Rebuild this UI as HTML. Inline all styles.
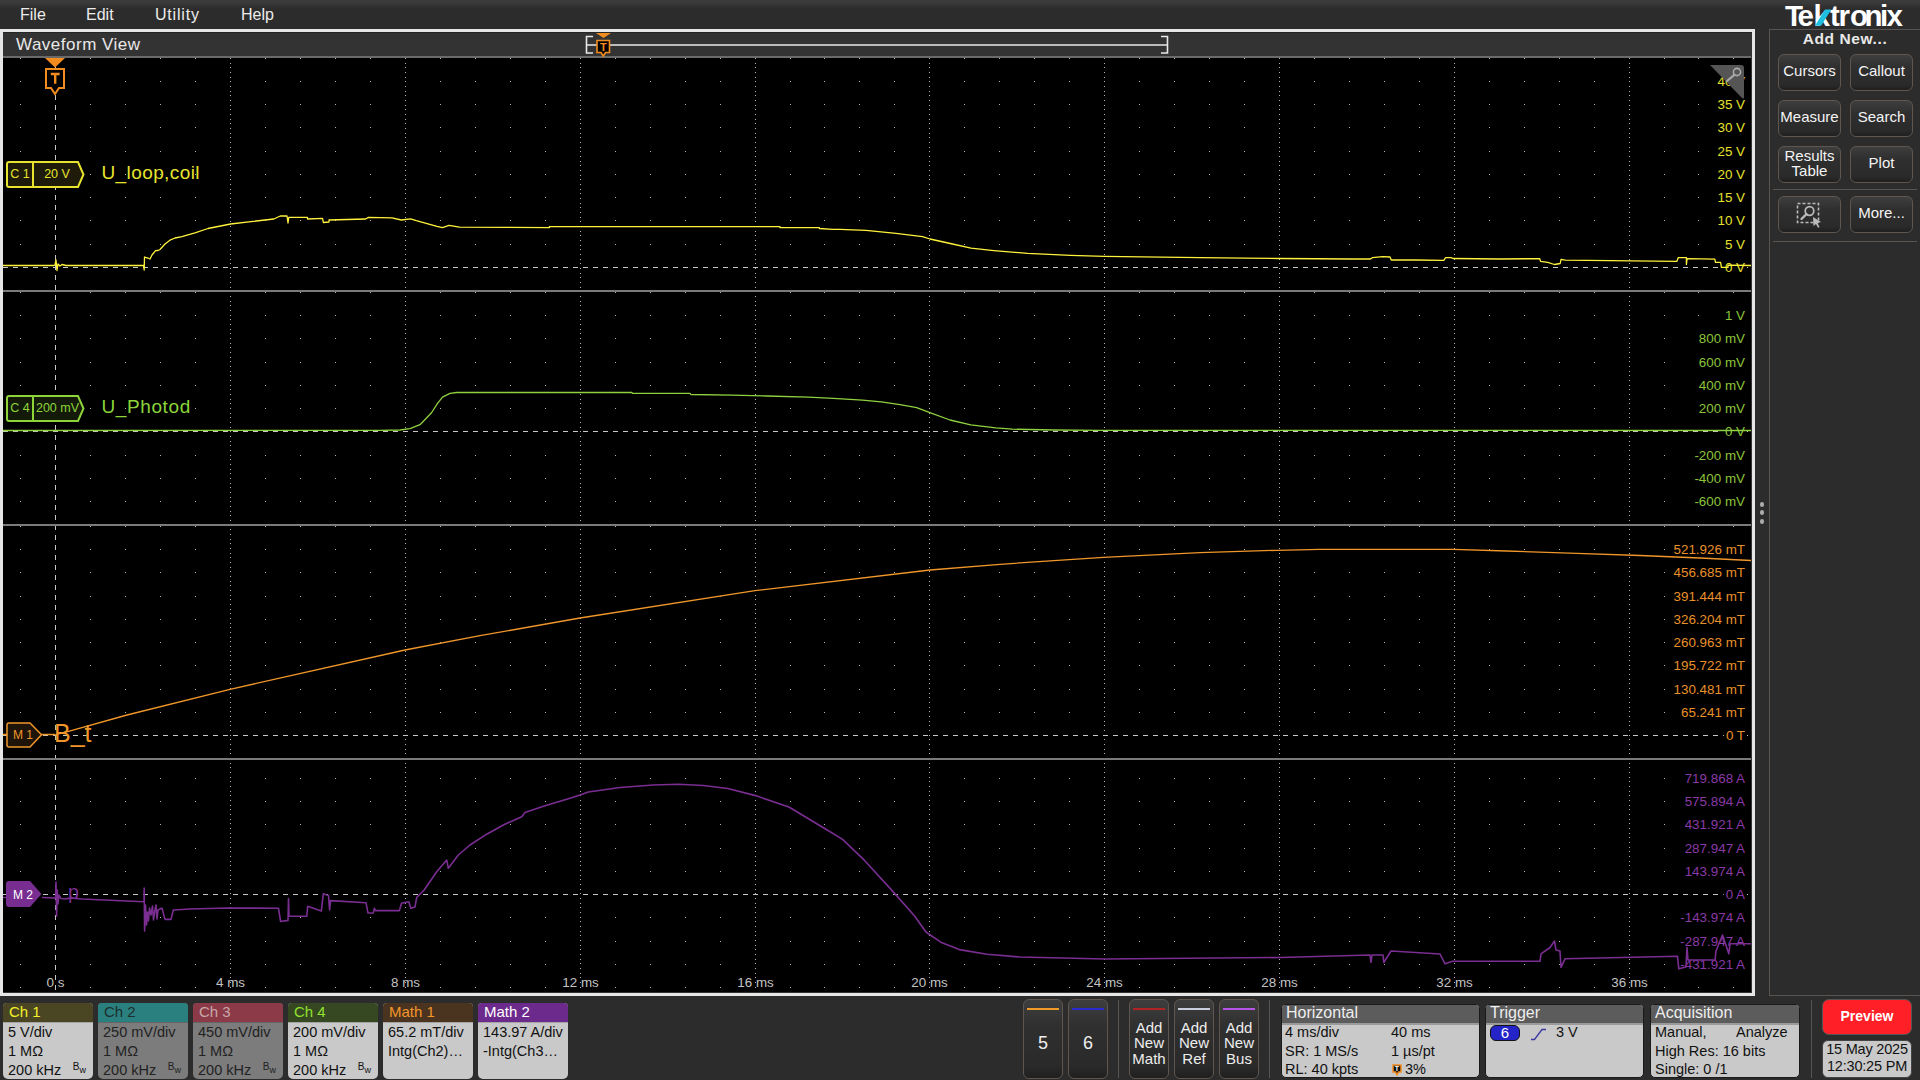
<!DOCTYPE html>
<html><head><meta charset="utf-8"><title>Tektronix Waveform View</title>
<style>
html,body{margin:0;padding:0;width:1920px;height:1080px;overflow:hidden;background:#2c2c2c;font-family:"Liberation Sans",sans-serif}
.btn{position:absolute;box-sizing:border-box;border:1px solid #5e564f;border-radius:6px;background:linear-gradient(#3e3e3e,#2f2f2f 35%,#2a2a2a 85%,#1f1f1f);color:#f4f4f4;font-size:15px;text-align:center;}
</style></head><body>
<div style="position:absolute;left:0;top:0;width:1920px;height:29px;background:linear-gradient(#3c3c3c 0px,#393939 3px,#2c2c2c 9px,#2c2c2c)"></div>
<div style="position:absolute;left:20px;top:4.5px;color:#ececec;font-size:16px;line-height:20px">File</div>
<div style="position:absolute;left:86px;top:4.5px;color:#ececec;font-size:16px;line-height:20px">Edit</div>
<div style="position:absolute;left:155px;top:4.5px;color:#ececec;font-size:16px;line-height:20px;letter-spacing:0.8px">Utility</div>
<div style="position:absolute;left:241px;top:4.5px;color:#ececec;font-size:16px;line-height:20px">Help</div>
<!-- waveform panel frame -->
<div style="position:absolute;left:0;top:29px;width:1755px;height:967px;box-sizing:border-box;border:3px solid #e6e6e6;border-right-width:3px;background:#333"></div>
<div style="position:absolute;left:3px;top:32px;width:1749px;height:1px;background:#262626"></div>
<div style="position:absolute;left:3px;top:56px;width:1748px;height:2px;background:#6a6a6a"></div>
<div style="position:absolute;left:16px;top:34.7px;color:#e8e8e8;font-size:17px;line-height:20px;letter-spacing:0.5px">Waveform View</div>
<svg style="position:absolute;left:580px;top:30px" width="600" height="28" viewBox="580 30 600 28">
<path d="M587 45H1167" stroke="#bbb" stroke-width="2"/>
<path d="M593 36.5H586.5V53H593" fill="none" stroke="#e8e8e8" stroke-width="1.6"/>
<path d="M1161 36.5H1167.5V53H1161" fill="none" stroke="#e8e8e8" stroke-width="1.6"/>
<path d="M596 33H611L603.5 38Z" fill="#f28c1e"/>
<path d="M597 40.5H609.5V52.5H605.5L603.3 56L601 52.5H597Z" fill="#000" stroke="#f28c1e" stroke-width="1.6"/>
<text x="603.3" y="50.5" fill="#f28c1e" font-family="Liberation Sans" font-weight="bold" font-size="11" text-anchor="middle">T</text>
</svg>
<svg id="plot" width="1920" height="1080" viewBox="0 0 1920 1080" style="position:absolute;left:0;top:0">
<defs><clipPath id="pc"><rect x="3" y="58" width="1748" height="934"/></clipPath></defs>
<rect x="3" y="58" width="1748" height="934" fill="#000"/>
<g clip-path="url(#pc)">
<path d="M20 58h1v1h-1zM90 58h1v1h-1zM125 58h1v1h-1zM160 58h1v1h-1zM195 58h1v1h-1zM265 58h1v1h-1zM300 58h1v1h-1zM335 58h1v1h-1zM370 58h1v1h-1zM440 58h1v1h-1zM475 58h1v1h-1zM510 58h1v1h-1zM545 58h1v1h-1zM615 58h1v1h-1zM650 58h1v1h-1zM685 58h1v1h-1zM720 58h1v1h-1zM790 58h1v1h-1zM824 58h1v1h-1zM859 58h1v1h-1zM894 58h1v1h-1zM964 58h1v1h-1zM999 58h1v1h-1zM1034 58h1v1h-1zM1069 58h1v1h-1zM1139 58h1v1h-1zM1174 58h1v1h-1zM1209 58h1v1h-1zM1244 58h1v1h-1zM1314 58h1v1h-1zM1349 58h1v1h-1zM1384 58h1v1h-1zM1419 58h1v1h-1zM1489 58h1v1h-1zM1524 58h1v1h-1zM1559 58h1v1h-1zM1594 58h1v1h-1zM1664 58h1v1h-1zM1698 58h1v1h-1zM1733 58h1v1h-1zM20 81h1v1h-1zM90 81h1v1h-1zM125 81h1v1h-1zM160 81h1v1h-1zM195 81h1v1h-1zM265 81h1v1h-1zM300 81h1v1h-1zM335 81h1v1h-1zM370 81h1v1h-1zM440 81h1v1h-1zM475 81h1v1h-1zM510 81h1v1h-1zM545 81h1v1h-1zM615 81h1v1h-1zM650 81h1v1h-1zM685 81h1v1h-1zM720 81h1v1h-1zM790 81h1v1h-1zM824 81h1v1h-1zM859 81h1v1h-1zM894 81h1v1h-1zM964 81h1v1h-1zM999 81h1v1h-1zM1034 81h1v1h-1zM1069 81h1v1h-1zM1139 81h1v1h-1zM1174 81h1v1h-1zM1209 81h1v1h-1zM1244 81h1v1h-1zM1314 81h1v1h-1zM1349 81h1v1h-1zM1384 81h1v1h-1zM1419 81h1v1h-1zM1489 81h1v1h-1zM1524 81h1v1h-1zM1559 81h1v1h-1zM1594 81h1v1h-1zM1664 81h1v1h-1zM1698 81h1v1h-1zM1733 81h1v1h-1zM20 104h1v1h-1zM90 104h1v1h-1zM125 104h1v1h-1zM160 104h1v1h-1zM195 104h1v1h-1zM265 104h1v1h-1zM300 104h1v1h-1zM335 104h1v1h-1zM370 104h1v1h-1zM440 104h1v1h-1zM475 104h1v1h-1zM510 104h1v1h-1zM545 104h1v1h-1zM615 104h1v1h-1zM650 104h1v1h-1zM685 104h1v1h-1zM720 104h1v1h-1zM790 104h1v1h-1zM824 104h1v1h-1zM859 104h1v1h-1zM894 104h1v1h-1zM964 104h1v1h-1zM999 104h1v1h-1zM1034 104h1v1h-1zM1069 104h1v1h-1zM1139 104h1v1h-1zM1174 104h1v1h-1zM1209 104h1v1h-1zM1244 104h1v1h-1zM1314 104h1v1h-1zM1349 104h1v1h-1zM1384 104h1v1h-1zM1419 104h1v1h-1zM1489 104h1v1h-1zM1524 104h1v1h-1zM1559 104h1v1h-1zM1594 104h1v1h-1zM1664 104h1v1h-1zM1698 104h1v1h-1zM1733 104h1v1h-1zM20 127h1v1h-1zM90 127h1v1h-1zM125 127h1v1h-1zM160 127h1v1h-1zM195 127h1v1h-1zM265 127h1v1h-1zM300 127h1v1h-1zM335 127h1v1h-1zM370 127h1v1h-1zM440 127h1v1h-1zM475 127h1v1h-1zM510 127h1v1h-1zM545 127h1v1h-1zM615 127h1v1h-1zM650 127h1v1h-1zM685 127h1v1h-1zM720 127h1v1h-1zM790 127h1v1h-1zM824 127h1v1h-1zM859 127h1v1h-1zM894 127h1v1h-1zM964 127h1v1h-1zM999 127h1v1h-1zM1034 127h1v1h-1zM1069 127h1v1h-1zM1139 127h1v1h-1zM1174 127h1v1h-1zM1209 127h1v1h-1zM1244 127h1v1h-1zM1314 127h1v1h-1zM1349 127h1v1h-1zM1384 127h1v1h-1zM1419 127h1v1h-1zM1489 127h1v1h-1zM1524 127h1v1h-1zM1559 127h1v1h-1zM1594 127h1v1h-1zM1664 127h1v1h-1zM1698 127h1v1h-1zM1733 127h1v1h-1zM20 151h1v1h-1zM90 151h1v1h-1zM125 151h1v1h-1zM160 151h1v1h-1zM195 151h1v1h-1zM265 151h1v1h-1zM300 151h1v1h-1zM335 151h1v1h-1zM370 151h1v1h-1zM440 151h1v1h-1zM475 151h1v1h-1zM510 151h1v1h-1zM545 151h1v1h-1zM615 151h1v1h-1zM650 151h1v1h-1zM685 151h1v1h-1zM720 151h1v1h-1zM790 151h1v1h-1zM824 151h1v1h-1zM859 151h1v1h-1zM894 151h1v1h-1zM964 151h1v1h-1zM999 151h1v1h-1zM1034 151h1v1h-1zM1069 151h1v1h-1zM1139 151h1v1h-1zM1174 151h1v1h-1zM1209 151h1v1h-1zM1244 151h1v1h-1zM1314 151h1v1h-1zM1349 151h1v1h-1zM1384 151h1v1h-1zM1419 151h1v1h-1zM1489 151h1v1h-1zM1524 151h1v1h-1zM1559 151h1v1h-1zM1594 151h1v1h-1zM1664 151h1v1h-1zM1698 151h1v1h-1zM1733 151h1v1h-1zM20 174h1v1h-1zM90 174h1v1h-1zM125 174h1v1h-1zM160 174h1v1h-1zM195 174h1v1h-1zM265 174h1v1h-1zM300 174h1v1h-1zM335 174h1v1h-1zM370 174h1v1h-1zM440 174h1v1h-1zM475 174h1v1h-1zM510 174h1v1h-1zM545 174h1v1h-1zM615 174h1v1h-1zM650 174h1v1h-1zM685 174h1v1h-1zM720 174h1v1h-1zM790 174h1v1h-1zM824 174h1v1h-1zM859 174h1v1h-1zM894 174h1v1h-1zM964 174h1v1h-1zM999 174h1v1h-1zM1034 174h1v1h-1zM1069 174h1v1h-1zM1139 174h1v1h-1zM1174 174h1v1h-1zM1209 174h1v1h-1zM1244 174h1v1h-1zM1314 174h1v1h-1zM1349 174h1v1h-1zM1384 174h1v1h-1zM1419 174h1v1h-1zM1489 174h1v1h-1zM1524 174h1v1h-1zM1559 174h1v1h-1zM1594 174h1v1h-1zM1664 174h1v1h-1zM1698 174h1v1h-1zM1733 174h1v1h-1zM20 197h1v1h-1zM90 197h1v1h-1zM125 197h1v1h-1zM160 197h1v1h-1zM195 197h1v1h-1zM265 197h1v1h-1zM300 197h1v1h-1zM335 197h1v1h-1zM370 197h1v1h-1zM440 197h1v1h-1zM475 197h1v1h-1zM510 197h1v1h-1zM545 197h1v1h-1zM615 197h1v1h-1zM650 197h1v1h-1zM685 197h1v1h-1zM720 197h1v1h-1zM790 197h1v1h-1zM824 197h1v1h-1zM859 197h1v1h-1zM894 197h1v1h-1zM964 197h1v1h-1zM999 197h1v1h-1zM1034 197h1v1h-1zM1069 197h1v1h-1zM1139 197h1v1h-1zM1174 197h1v1h-1zM1209 197h1v1h-1zM1244 197h1v1h-1zM1314 197h1v1h-1zM1349 197h1v1h-1zM1384 197h1v1h-1zM1419 197h1v1h-1zM1489 197h1v1h-1zM1524 197h1v1h-1zM1559 197h1v1h-1zM1594 197h1v1h-1zM1664 197h1v1h-1zM1698 197h1v1h-1zM1733 197h1v1h-1zM20 220h1v1h-1zM90 220h1v1h-1zM125 220h1v1h-1zM160 220h1v1h-1zM195 220h1v1h-1zM265 220h1v1h-1zM300 220h1v1h-1zM335 220h1v1h-1zM370 220h1v1h-1zM440 220h1v1h-1zM475 220h1v1h-1zM510 220h1v1h-1zM545 220h1v1h-1zM615 220h1v1h-1zM650 220h1v1h-1zM685 220h1v1h-1zM720 220h1v1h-1zM790 220h1v1h-1zM824 220h1v1h-1zM859 220h1v1h-1zM894 220h1v1h-1zM964 220h1v1h-1zM999 220h1v1h-1zM1034 220h1v1h-1zM1069 220h1v1h-1zM1139 220h1v1h-1zM1174 220h1v1h-1zM1209 220h1v1h-1zM1244 220h1v1h-1zM1314 220h1v1h-1zM1349 220h1v1h-1zM1384 220h1v1h-1zM1419 220h1v1h-1zM1489 220h1v1h-1zM1524 220h1v1h-1zM1559 220h1v1h-1zM1594 220h1v1h-1zM1664 220h1v1h-1zM1698 220h1v1h-1zM1733 220h1v1h-1zM20 244h1v1h-1zM90 244h1v1h-1zM125 244h1v1h-1zM160 244h1v1h-1zM195 244h1v1h-1zM265 244h1v1h-1zM300 244h1v1h-1zM335 244h1v1h-1zM370 244h1v1h-1zM440 244h1v1h-1zM475 244h1v1h-1zM510 244h1v1h-1zM545 244h1v1h-1zM615 244h1v1h-1zM650 244h1v1h-1zM685 244h1v1h-1zM720 244h1v1h-1zM790 244h1v1h-1zM824 244h1v1h-1zM859 244h1v1h-1zM894 244h1v1h-1zM964 244h1v1h-1zM999 244h1v1h-1zM1034 244h1v1h-1zM1069 244h1v1h-1zM1139 244h1v1h-1zM1174 244h1v1h-1zM1209 244h1v1h-1zM1244 244h1v1h-1zM1314 244h1v1h-1zM1349 244h1v1h-1zM1384 244h1v1h-1zM1419 244h1v1h-1zM1489 244h1v1h-1zM1524 244h1v1h-1zM1559 244h1v1h-1zM1594 244h1v1h-1zM1664 244h1v1h-1zM1698 244h1v1h-1zM1733 244h1v1h-1zM20 292h1v1h-1zM90 292h1v1h-1zM125 292h1v1h-1zM160 292h1v1h-1zM195 292h1v1h-1zM265 292h1v1h-1zM300 292h1v1h-1zM335 292h1v1h-1zM370 292h1v1h-1zM440 292h1v1h-1zM475 292h1v1h-1zM510 292h1v1h-1zM545 292h1v1h-1zM615 292h1v1h-1zM650 292h1v1h-1zM685 292h1v1h-1zM720 292h1v1h-1zM790 292h1v1h-1zM824 292h1v1h-1zM859 292h1v1h-1zM894 292h1v1h-1zM964 292h1v1h-1zM999 292h1v1h-1zM1034 292h1v1h-1zM1069 292h1v1h-1zM1139 292h1v1h-1zM1174 292h1v1h-1zM1209 292h1v1h-1zM1244 292h1v1h-1zM1314 292h1v1h-1zM1349 292h1v1h-1zM1384 292h1v1h-1zM1419 292h1v1h-1zM1489 292h1v1h-1zM1524 292h1v1h-1zM1559 292h1v1h-1zM1594 292h1v1h-1zM1664 292h1v1h-1zM1698 292h1v1h-1zM1733 292h1v1h-1zM20 315h1v1h-1zM90 315h1v1h-1zM125 315h1v1h-1zM160 315h1v1h-1zM195 315h1v1h-1zM265 315h1v1h-1zM300 315h1v1h-1zM335 315h1v1h-1zM370 315h1v1h-1zM440 315h1v1h-1zM475 315h1v1h-1zM510 315h1v1h-1zM545 315h1v1h-1zM615 315h1v1h-1zM650 315h1v1h-1zM685 315h1v1h-1zM720 315h1v1h-1zM790 315h1v1h-1zM824 315h1v1h-1zM859 315h1v1h-1zM894 315h1v1h-1zM964 315h1v1h-1zM999 315h1v1h-1zM1034 315h1v1h-1zM1069 315h1v1h-1zM1139 315h1v1h-1zM1174 315h1v1h-1zM1209 315h1v1h-1zM1244 315h1v1h-1zM1314 315h1v1h-1zM1349 315h1v1h-1zM1384 315h1v1h-1zM1419 315h1v1h-1zM1489 315h1v1h-1zM1524 315h1v1h-1zM1559 315h1v1h-1zM1594 315h1v1h-1zM1664 315h1v1h-1zM1698 315h1v1h-1zM1733 315h1v1h-1zM20 338h1v1h-1zM90 338h1v1h-1zM125 338h1v1h-1zM160 338h1v1h-1zM195 338h1v1h-1zM265 338h1v1h-1zM300 338h1v1h-1zM335 338h1v1h-1zM370 338h1v1h-1zM440 338h1v1h-1zM475 338h1v1h-1zM510 338h1v1h-1zM545 338h1v1h-1zM615 338h1v1h-1zM650 338h1v1h-1zM685 338h1v1h-1zM720 338h1v1h-1zM790 338h1v1h-1zM824 338h1v1h-1zM859 338h1v1h-1zM894 338h1v1h-1zM964 338h1v1h-1zM999 338h1v1h-1zM1034 338h1v1h-1zM1069 338h1v1h-1zM1139 338h1v1h-1zM1174 338h1v1h-1zM1209 338h1v1h-1zM1244 338h1v1h-1zM1314 338h1v1h-1zM1349 338h1v1h-1zM1384 338h1v1h-1zM1419 338h1v1h-1zM1489 338h1v1h-1zM1524 338h1v1h-1zM1559 338h1v1h-1zM1594 338h1v1h-1zM1664 338h1v1h-1zM1698 338h1v1h-1zM1733 338h1v1h-1zM20 362h1v1h-1zM90 362h1v1h-1zM125 362h1v1h-1zM160 362h1v1h-1zM195 362h1v1h-1zM265 362h1v1h-1zM300 362h1v1h-1zM335 362h1v1h-1zM370 362h1v1h-1zM440 362h1v1h-1zM475 362h1v1h-1zM510 362h1v1h-1zM545 362h1v1h-1zM615 362h1v1h-1zM650 362h1v1h-1zM685 362h1v1h-1zM720 362h1v1h-1zM790 362h1v1h-1zM824 362h1v1h-1zM859 362h1v1h-1zM894 362h1v1h-1zM964 362h1v1h-1zM999 362h1v1h-1zM1034 362h1v1h-1zM1069 362h1v1h-1zM1139 362h1v1h-1zM1174 362h1v1h-1zM1209 362h1v1h-1zM1244 362h1v1h-1zM1314 362h1v1h-1zM1349 362h1v1h-1zM1384 362h1v1h-1zM1419 362h1v1h-1zM1489 362h1v1h-1zM1524 362h1v1h-1zM1559 362h1v1h-1zM1594 362h1v1h-1zM1664 362h1v1h-1zM1698 362h1v1h-1zM1733 362h1v1h-1zM20 385h1v1h-1zM90 385h1v1h-1zM125 385h1v1h-1zM160 385h1v1h-1zM195 385h1v1h-1zM265 385h1v1h-1zM300 385h1v1h-1zM335 385h1v1h-1zM370 385h1v1h-1zM440 385h1v1h-1zM475 385h1v1h-1zM510 385h1v1h-1zM545 385h1v1h-1zM615 385h1v1h-1zM650 385h1v1h-1zM685 385h1v1h-1zM720 385h1v1h-1zM790 385h1v1h-1zM824 385h1v1h-1zM859 385h1v1h-1zM894 385h1v1h-1zM964 385h1v1h-1zM999 385h1v1h-1zM1034 385h1v1h-1zM1069 385h1v1h-1zM1139 385h1v1h-1zM1174 385h1v1h-1zM1209 385h1v1h-1zM1244 385h1v1h-1zM1314 385h1v1h-1zM1349 385h1v1h-1zM1384 385h1v1h-1zM1419 385h1v1h-1zM1489 385h1v1h-1zM1524 385h1v1h-1zM1559 385h1v1h-1zM1594 385h1v1h-1zM1664 385h1v1h-1zM1698 385h1v1h-1zM1733 385h1v1h-1zM20 408h1v1h-1zM90 408h1v1h-1zM125 408h1v1h-1zM160 408h1v1h-1zM195 408h1v1h-1zM265 408h1v1h-1zM300 408h1v1h-1zM335 408h1v1h-1zM370 408h1v1h-1zM440 408h1v1h-1zM475 408h1v1h-1zM510 408h1v1h-1zM545 408h1v1h-1zM615 408h1v1h-1zM650 408h1v1h-1zM685 408h1v1h-1zM720 408h1v1h-1zM790 408h1v1h-1zM824 408h1v1h-1zM859 408h1v1h-1zM894 408h1v1h-1zM964 408h1v1h-1zM999 408h1v1h-1zM1034 408h1v1h-1zM1069 408h1v1h-1zM1139 408h1v1h-1zM1174 408h1v1h-1zM1209 408h1v1h-1zM1244 408h1v1h-1zM1314 408h1v1h-1zM1349 408h1v1h-1zM1384 408h1v1h-1zM1419 408h1v1h-1zM1489 408h1v1h-1zM1524 408h1v1h-1zM1559 408h1v1h-1zM1594 408h1v1h-1zM1664 408h1v1h-1zM1698 408h1v1h-1zM1733 408h1v1h-1zM20 455h1v1h-1zM90 455h1v1h-1zM125 455h1v1h-1zM160 455h1v1h-1zM195 455h1v1h-1zM265 455h1v1h-1zM300 455h1v1h-1zM335 455h1v1h-1zM370 455h1v1h-1zM440 455h1v1h-1zM475 455h1v1h-1zM510 455h1v1h-1zM545 455h1v1h-1zM615 455h1v1h-1zM650 455h1v1h-1zM685 455h1v1h-1zM720 455h1v1h-1zM790 455h1v1h-1zM824 455h1v1h-1zM859 455h1v1h-1zM894 455h1v1h-1zM964 455h1v1h-1zM999 455h1v1h-1zM1034 455h1v1h-1zM1069 455h1v1h-1zM1139 455h1v1h-1zM1174 455h1v1h-1zM1209 455h1v1h-1zM1244 455h1v1h-1zM1314 455h1v1h-1zM1349 455h1v1h-1zM1384 455h1v1h-1zM1419 455h1v1h-1zM1489 455h1v1h-1zM1524 455h1v1h-1zM1559 455h1v1h-1zM1594 455h1v1h-1zM1664 455h1v1h-1zM1698 455h1v1h-1zM1733 455h1v1h-1zM20 478h1v1h-1zM90 478h1v1h-1zM125 478h1v1h-1zM160 478h1v1h-1zM195 478h1v1h-1zM265 478h1v1h-1zM300 478h1v1h-1zM335 478h1v1h-1zM370 478h1v1h-1zM440 478h1v1h-1zM475 478h1v1h-1zM510 478h1v1h-1zM545 478h1v1h-1zM615 478h1v1h-1zM650 478h1v1h-1zM685 478h1v1h-1zM720 478h1v1h-1zM790 478h1v1h-1zM824 478h1v1h-1zM859 478h1v1h-1zM894 478h1v1h-1zM964 478h1v1h-1zM999 478h1v1h-1zM1034 478h1v1h-1zM1069 478h1v1h-1zM1139 478h1v1h-1zM1174 478h1v1h-1zM1209 478h1v1h-1zM1244 478h1v1h-1zM1314 478h1v1h-1zM1349 478h1v1h-1zM1384 478h1v1h-1zM1419 478h1v1h-1zM1489 478h1v1h-1zM1524 478h1v1h-1zM1559 478h1v1h-1zM1594 478h1v1h-1zM1664 478h1v1h-1zM1698 478h1v1h-1zM1733 478h1v1h-1zM20 501h1v1h-1zM90 501h1v1h-1zM125 501h1v1h-1zM160 501h1v1h-1zM195 501h1v1h-1zM265 501h1v1h-1zM300 501h1v1h-1zM335 501h1v1h-1zM370 501h1v1h-1zM440 501h1v1h-1zM475 501h1v1h-1zM510 501h1v1h-1zM545 501h1v1h-1zM615 501h1v1h-1zM650 501h1v1h-1zM685 501h1v1h-1zM720 501h1v1h-1zM790 501h1v1h-1zM824 501h1v1h-1zM859 501h1v1h-1zM894 501h1v1h-1zM964 501h1v1h-1zM999 501h1v1h-1zM1034 501h1v1h-1zM1069 501h1v1h-1zM1139 501h1v1h-1zM1174 501h1v1h-1zM1209 501h1v1h-1zM1244 501h1v1h-1zM1314 501h1v1h-1zM1349 501h1v1h-1zM1384 501h1v1h-1zM1419 501h1v1h-1zM1489 501h1v1h-1zM1524 501h1v1h-1zM1559 501h1v1h-1zM1594 501h1v1h-1zM1664 501h1v1h-1zM1698 501h1v1h-1zM1733 501h1v1h-1zM20 526h1v1h-1zM90 526h1v1h-1zM125 526h1v1h-1zM160 526h1v1h-1zM195 526h1v1h-1zM265 526h1v1h-1zM300 526h1v1h-1zM335 526h1v1h-1zM370 526h1v1h-1zM440 526h1v1h-1zM475 526h1v1h-1zM510 526h1v1h-1zM545 526h1v1h-1zM615 526h1v1h-1zM650 526h1v1h-1zM685 526h1v1h-1zM720 526h1v1h-1zM790 526h1v1h-1zM824 526h1v1h-1zM859 526h1v1h-1zM894 526h1v1h-1zM964 526h1v1h-1zM999 526h1v1h-1zM1034 526h1v1h-1zM1069 526h1v1h-1zM1139 526h1v1h-1zM1174 526h1v1h-1zM1209 526h1v1h-1zM1244 526h1v1h-1zM1314 526h1v1h-1zM1349 526h1v1h-1zM1384 526h1v1h-1zM1419 526h1v1h-1zM1489 526h1v1h-1zM1524 526h1v1h-1zM1559 526h1v1h-1zM1594 526h1v1h-1zM1664 526h1v1h-1zM1698 526h1v1h-1zM1733 526h1v1h-1zM20 549h1v1h-1zM90 549h1v1h-1zM125 549h1v1h-1zM160 549h1v1h-1zM195 549h1v1h-1zM265 549h1v1h-1zM300 549h1v1h-1zM335 549h1v1h-1zM370 549h1v1h-1zM440 549h1v1h-1zM475 549h1v1h-1zM510 549h1v1h-1zM545 549h1v1h-1zM615 549h1v1h-1zM650 549h1v1h-1zM685 549h1v1h-1zM720 549h1v1h-1zM790 549h1v1h-1zM824 549h1v1h-1zM859 549h1v1h-1zM894 549h1v1h-1zM964 549h1v1h-1zM999 549h1v1h-1zM1034 549h1v1h-1zM1069 549h1v1h-1zM1139 549h1v1h-1zM1174 549h1v1h-1zM1209 549h1v1h-1zM1244 549h1v1h-1zM1314 549h1v1h-1zM1349 549h1v1h-1zM1384 549h1v1h-1zM1419 549h1v1h-1zM1489 549h1v1h-1zM1524 549h1v1h-1zM1559 549h1v1h-1zM1594 549h1v1h-1zM1664 549h1v1h-1zM1698 549h1v1h-1zM1733 549h1v1h-1zM20 572h1v1h-1zM90 572h1v1h-1zM125 572h1v1h-1zM160 572h1v1h-1zM195 572h1v1h-1zM265 572h1v1h-1zM300 572h1v1h-1zM335 572h1v1h-1zM370 572h1v1h-1zM440 572h1v1h-1zM475 572h1v1h-1zM510 572h1v1h-1zM545 572h1v1h-1zM615 572h1v1h-1zM650 572h1v1h-1zM685 572h1v1h-1zM720 572h1v1h-1zM790 572h1v1h-1zM824 572h1v1h-1zM859 572h1v1h-1zM894 572h1v1h-1zM964 572h1v1h-1zM999 572h1v1h-1zM1034 572h1v1h-1zM1069 572h1v1h-1zM1139 572h1v1h-1zM1174 572h1v1h-1zM1209 572h1v1h-1zM1244 572h1v1h-1zM1314 572h1v1h-1zM1349 572h1v1h-1zM1384 572h1v1h-1zM1419 572h1v1h-1zM1489 572h1v1h-1zM1524 572h1v1h-1zM1559 572h1v1h-1zM1594 572h1v1h-1zM1664 572h1v1h-1zM1698 572h1v1h-1zM1733 572h1v1h-1zM20 596h1v1h-1zM90 596h1v1h-1zM125 596h1v1h-1zM160 596h1v1h-1zM195 596h1v1h-1zM265 596h1v1h-1zM300 596h1v1h-1zM335 596h1v1h-1zM370 596h1v1h-1zM440 596h1v1h-1zM475 596h1v1h-1zM510 596h1v1h-1zM545 596h1v1h-1zM615 596h1v1h-1zM650 596h1v1h-1zM685 596h1v1h-1zM720 596h1v1h-1zM790 596h1v1h-1zM824 596h1v1h-1zM859 596h1v1h-1zM894 596h1v1h-1zM964 596h1v1h-1zM999 596h1v1h-1zM1034 596h1v1h-1zM1069 596h1v1h-1zM1139 596h1v1h-1zM1174 596h1v1h-1zM1209 596h1v1h-1zM1244 596h1v1h-1zM1314 596h1v1h-1zM1349 596h1v1h-1zM1384 596h1v1h-1zM1419 596h1v1h-1zM1489 596h1v1h-1zM1524 596h1v1h-1zM1559 596h1v1h-1zM1594 596h1v1h-1zM1664 596h1v1h-1zM1698 596h1v1h-1zM1733 596h1v1h-1zM20 619h1v1h-1zM90 619h1v1h-1zM125 619h1v1h-1zM160 619h1v1h-1zM195 619h1v1h-1zM265 619h1v1h-1zM300 619h1v1h-1zM335 619h1v1h-1zM370 619h1v1h-1zM440 619h1v1h-1zM475 619h1v1h-1zM510 619h1v1h-1zM545 619h1v1h-1zM615 619h1v1h-1zM650 619h1v1h-1zM685 619h1v1h-1zM720 619h1v1h-1zM790 619h1v1h-1zM824 619h1v1h-1zM859 619h1v1h-1zM894 619h1v1h-1zM964 619h1v1h-1zM999 619h1v1h-1zM1034 619h1v1h-1zM1069 619h1v1h-1zM1139 619h1v1h-1zM1174 619h1v1h-1zM1209 619h1v1h-1zM1244 619h1v1h-1zM1314 619h1v1h-1zM1349 619h1v1h-1zM1384 619h1v1h-1zM1419 619h1v1h-1zM1489 619h1v1h-1zM1524 619h1v1h-1zM1559 619h1v1h-1zM1594 619h1v1h-1zM1664 619h1v1h-1zM1698 619h1v1h-1zM1733 619h1v1h-1zM20 642h1v1h-1zM90 642h1v1h-1zM125 642h1v1h-1zM160 642h1v1h-1zM195 642h1v1h-1zM265 642h1v1h-1zM300 642h1v1h-1zM335 642h1v1h-1zM370 642h1v1h-1zM440 642h1v1h-1zM475 642h1v1h-1zM510 642h1v1h-1zM545 642h1v1h-1zM615 642h1v1h-1zM650 642h1v1h-1zM685 642h1v1h-1zM720 642h1v1h-1zM790 642h1v1h-1zM824 642h1v1h-1zM859 642h1v1h-1zM894 642h1v1h-1zM964 642h1v1h-1zM999 642h1v1h-1zM1034 642h1v1h-1zM1069 642h1v1h-1zM1139 642h1v1h-1zM1174 642h1v1h-1zM1209 642h1v1h-1zM1244 642h1v1h-1zM1314 642h1v1h-1zM1349 642h1v1h-1zM1384 642h1v1h-1zM1419 642h1v1h-1zM1489 642h1v1h-1zM1524 642h1v1h-1zM1559 642h1v1h-1zM1594 642h1v1h-1zM1664 642h1v1h-1zM1698 642h1v1h-1zM1733 642h1v1h-1zM20 665h1v1h-1zM90 665h1v1h-1zM125 665h1v1h-1zM160 665h1v1h-1zM195 665h1v1h-1zM265 665h1v1h-1zM300 665h1v1h-1zM335 665h1v1h-1zM370 665h1v1h-1zM440 665h1v1h-1zM475 665h1v1h-1zM510 665h1v1h-1zM545 665h1v1h-1zM615 665h1v1h-1zM650 665h1v1h-1zM685 665h1v1h-1zM720 665h1v1h-1zM790 665h1v1h-1zM824 665h1v1h-1zM859 665h1v1h-1zM894 665h1v1h-1zM964 665h1v1h-1zM999 665h1v1h-1zM1034 665h1v1h-1zM1069 665h1v1h-1zM1139 665h1v1h-1zM1174 665h1v1h-1zM1209 665h1v1h-1zM1244 665h1v1h-1zM1314 665h1v1h-1zM1349 665h1v1h-1zM1384 665h1v1h-1zM1419 665h1v1h-1zM1489 665h1v1h-1zM1524 665h1v1h-1zM1559 665h1v1h-1zM1594 665h1v1h-1zM1664 665h1v1h-1zM1698 665h1v1h-1zM1733 665h1v1h-1zM20 689h1v1h-1zM90 689h1v1h-1zM125 689h1v1h-1zM160 689h1v1h-1zM195 689h1v1h-1zM265 689h1v1h-1zM300 689h1v1h-1zM335 689h1v1h-1zM370 689h1v1h-1zM440 689h1v1h-1zM475 689h1v1h-1zM510 689h1v1h-1zM545 689h1v1h-1zM615 689h1v1h-1zM650 689h1v1h-1zM685 689h1v1h-1zM720 689h1v1h-1zM790 689h1v1h-1zM824 689h1v1h-1zM859 689h1v1h-1zM894 689h1v1h-1zM964 689h1v1h-1zM999 689h1v1h-1zM1034 689h1v1h-1zM1069 689h1v1h-1zM1139 689h1v1h-1zM1174 689h1v1h-1zM1209 689h1v1h-1zM1244 689h1v1h-1zM1314 689h1v1h-1zM1349 689h1v1h-1zM1384 689h1v1h-1zM1419 689h1v1h-1zM1489 689h1v1h-1zM1524 689h1v1h-1zM1559 689h1v1h-1zM1594 689h1v1h-1zM1664 689h1v1h-1zM1698 689h1v1h-1zM1733 689h1v1h-1zM20 712h1v1h-1zM90 712h1v1h-1zM125 712h1v1h-1zM160 712h1v1h-1zM195 712h1v1h-1zM265 712h1v1h-1zM300 712h1v1h-1zM335 712h1v1h-1zM370 712h1v1h-1zM440 712h1v1h-1zM475 712h1v1h-1zM510 712h1v1h-1zM545 712h1v1h-1zM615 712h1v1h-1zM650 712h1v1h-1zM685 712h1v1h-1zM720 712h1v1h-1zM790 712h1v1h-1zM824 712h1v1h-1zM859 712h1v1h-1zM894 712h1v1h-1zM964 712h1v1h-1zM999 712h1v1h-1zM1034 712h1v1h-1zM1069 712h1v1h-1zM1139 712h1v1h-1zM1174 712h1v1h-1zM1209 712h1v1h-1zM1244 712h1v1h-1zM1314 712h1v1h-1zM1349 712h1v1h-1zM1384 712h1v1h-1zM1419 712h1v1h-1zM1489 712h1v1h-1zM1524 712h1v1h-1zM1559 712h1v1h-1zM1594 712h1v1h-1zM1664 712h1v1h-1zM1698 712h1v1h-1zM1733 712h1v1h-1zM20 778h1v1h-1zM90 778h1v1h-1zM125 778h1v1h-1zM160 778h1v1h-1zM195 778h1v1h-1zM265 778h1v1h-1zM300 778h1v1h-1zM335 778h1v1h-1zM370 778h1v1h-1zM440 778h1v1h-1zM475 778h1v1h-1zM510 778h1v1h-1zM545 778h1v1h-1zM615 778h1v1h-1zM650 778h1v1h-1zM685 778h1v1h-1zM720 778h1v1h-1zM790 778h1v1h-1zM824 778h1v1h-1zM859 778h1v1h-1zM894 778h1v1h-1zM964 778h1v1h-1zM999 778h1v1h-1zM1034 778h1v1h-1zM1069 778h1v1h-1zM1139 778h1v1h-1zM1174 778h1v1h-1zM1209 778h1v1h-1zM1244 778h1v1h-1zM1314 778h1v1h-1zM1349 778h1v1h-1zM1384 778h1v1h-1zM1419 778h1v1h-1zM1489 778h1v1h-1zM1524 778h1v1h-1zM1559 778h1v1h-1zM1594 778h1v1h-1zM1664 778h1v1h-1zM1698 778h1v1h-1zM1733 778h1v1h-1zM20 801h1v1h-1zM90 801h1v1h-1zM125 801h1v1h-1zM160 801h1v1h-1zM195 801h1v1h-1zM265 801h1v1h-1zM300 801h1v1h-1zM335 801h1v1h-1zM370 801h1v1h-1zM440 801h1v1h-1zM475 801h1v1h-1zM510 801h1v1h-1zM545 801h1v1h-1zM615 801h1v1h-1zM650 801h1v1h-1zM685 801h1v1h-1zM720 801h1v1h-1zM790 801h1v1h-1zM824 801h1v1h-1zM859 801h1v1h-1zM894 801h1v1h-1zM964 801h1v1h-1zM999 801h1v1h-1zM1034 801h1v1h-1zM1069 801h1v1h-1zM1139 801h1v1h-1zM1174 801h1v1h-1zM1209 801h1v1h-1zM1244 801h1v1h-1zM1314 801h1v1h-1zM1349 801h1v1h-1zM1384 801h1v1h-1zM1419 801h1v1h-1zM1489 801h1v1h-1zM1524 801h1v1h-1zM1559 801h1v1h-1zM1594 801h1v1h-1zM1664 801h1v1h-1zM1698 801h1v1h-1zM1733 801h1v1h-1zM20 824h1v1h-1zM90 824h1v1h-1zM125 824h1v1h-1zM160 824h1v1h-1zM195 824h1v1h-1zM265 824h1v1h-1zM300 824h1v1h-1zM335 824h1v1h-1zM370 824h1v1h-1zM440 824h1v1h-1zM475 824h1v1h-1zM510 824h1v1h-1zM545 824h1v1h-1zM615 824h1v1h-1zM650 824h1v1h-1zM685 824h1v1h-1zM720 824h1v1h-1zM790 824h1v1h-1zM824 824h1v1h-1zM859 824h1v1h-1zM894 824h1v1h-1zM964 824h1v1h-1zM999 824h1v1h-1zM1034 824h1v1h-1zM1069 824h1v1h-1zM1139 824h1v1h-1zM1174 824h1v1h-1zM1209 824h1v1h-1zM1244 824h1v1h-1zM1314 824h1v1h-1zM1349 824h1v1h-1zM1384 824h1v1h-1zM1419 824h1v1h-1zM1489 824h1v1h-1zM1524 824h1v1h-1zM1559 824h1v1h-1zM1594 824h1v1h-1zM1664 824h1v1h-1zM1698 824h1v1h-1zM1733 824h1v1h-1zM20 848h1v1h-1zM90 848h1v1h-1zM125 848h1v1h-1zM160 848h1v1h-1zM195 848h1v1h-1zM265 848h1v1h-1zM300 848h1v1h-1zM335 848h1v1h-1zM370 848h1v1h-1zM440 848h1v1h-1zM475 848h1v1h-1zM510 848h1v1h-1zM545 848h1v1h-1zM615 848h1v1h-1zM650 848h1v1h-1zM685 848h1v1h-1zM720 848h1v1h-1zM790 848h1v1h-1zM824 848h1v1h-1zM859 848h1v1h-1zM894 848h1v1h-1zM964 848h1v1h-1zM999 848h1v1h-1zM1034 848h1v1h-1zM1069 848h1v1h-1zM1139 848h1v1h-1zM1174 848h1v1h-1zM1209 848h1v1h-1zM1244 848h1v1h-1zM1314 848h1v1h-1zM1349 848h1v1h-1zM1384 848h1v1h-1zM1419 848h1v1h-1zM1489 848h1v1h-1zM1524 848h1v1h-1zM1559 848h1v1h-1zM1594 848h1v1h-1zM1664 848h1v1h-1zM1698 848h1v1h-1zM1733 848h1v1h-1zM20 871h1v1h-1zM90 871h1v1h-1zM125 871h1v1h-1zM160 871h1v1h-1zM195 871h1v1h-1zM265 871h1v1h-1zM300 871h1v1h-1zM335 871h1v1h-1zM370 871h1v1h-1zM440 871h1v1h-1zM475 871h1v1h-1zM510 871h1v1h-1zM545 871h1v1h-1zM615 871h1v1h-1zM650 871h1v1h-1zM685 871h1v1h-1zM720 871h1v1h-1zM790 871h1v1h-1zM824 871h1v1h-1zM859 871h1v1h-1zM894 871h1v1h-1zM964 871h1v1h-1zM999 871h1v1h-1zM1034 871h1v1h-1zM1069 871h1v1h-1zM1139 871h1v1h-1zM1174 871h1v1h-1zM1209 871h1v1h-1zM1244 871h1v1h-1zM1314 871h1v1h-1zM1349 871h1v1h-1zM1384 871h1v1h-1zM1419 871h1v1h-1zM1489 871h1v1h-1zM1524 871h1v1h-1zM1559 871h1v1h-1zM1594 871h1v1h-1zM1664 871h1v1h-1zM1698 871h1v1h-1zM1733 871h1v1h-1zM20 917h1v1h-1zM90 917h1v1h-1zM125 917h1v1h-1zM160 917h1v1h-1zM195 917h1v1h-1zM265 917h1v1h-1zM300 917h1v1h-1zM335 917h1v1h-1zM370 917h1v1h-1zM440 917h1v1h-1zM475 917h1v1h-1zM510 917h1v1h-1zM545 917h1v1h-1zM615 917h1v1h-1zM650 917h1v1h-1zM685 917h1v1h-1zM720 917h1v1h-1zM790 917h1v1h-1zM824 917h1v1h-1zM859 917h1v1h-1zM894 917h1v1h-1zM964 917h1v1h-1zM999 917h1v1h-1zM1034 917h1v1h-1zM1069 917h1v1h-1zM1139 917h1v1h-1zM1174 917h1v1h-1zM1209 917h1v1h-1zM1244 917h1v1h-1zM1314 917h1v1h-1zM1349 917h1v1h-1zM1384 917h1v1h-1zM1419 917h1v1h-1zM1489 917h1v1h-1zM1524 917h1v1h-1zM1559 917h1v1h-1zM1594 917h1v1h-1zM1664 917h1v1h-1zM1698 917h1v1h-1zM1733 917h1v1h-1zM20 941h1v1h-1zM90 941h1v1h-1zM125 941h1v1h-1zM160 941h1v1h-1zM195 941h1v1h-1zM265 941h1v1h-1zM300 941h1v1h-1zM335 941h1v1h-1zM370 941h1v1h-1zM440 941h1v1h-1zM475 941h1v1h-1zM510 941h1v1h-1zM545 941h1v1h-1zM615 941h1v1h-1zM650 941h1v1h-1zM685 941h1v1h-1zM720 941h1v1h-1zM790 941h1v1h-1zM824 941h1v1h-1zM859 941h1v1h-1zM894 941h1v1h-1zM964 941h1v1h-1zM999 941h1v1h-1zM1034 941h1v1h-1zM1069 941h1v1h-1zM1139 941h1v1h-1zM1174 941h1v1h-1zM1209 941h1v1h-1zM1244 941h1v1h-1zM1314 941h1v1h-1zM1349 941h1v1h-1zM1384 941h1v1h-1zM1419 941h1v1h-1zM1489 941h1v1h-1zM1524 941h1v1h-1zM1559 941h1v1h-1zM1594 941h1v1h-1zM1664 941h1v1h-1zM1698 941h1v1h-1zM1733 941h1v1h-1zM20 964h1v1h-1zM90 964h1v1h-1zM125 964h1v1h-1zM160 964h1v1h-1zM195 964h1v1h-1zM265 964h1v1h-1zM300 964h1v1h-1zM335 964h1v1h-1zM370 964h1v1h-1zM440 964h1v1h-1zM475 964h1v1h-1zM510 964h1v1h-1zM545 964h1v1h-1zM615 964h1v1h-1zM650 964h1v1h-1zM685 964h1v1h-1zM720 964h1v1h-1zM790 964h1v1h-1zM824 964h1v1h-1zM859 964h1v1h-1zM894 964h1v1h-1zM964 964h1v1h-1zM999 964h1v1h-1zM1034 964h1v1h-1zM1069 964h1v1h-1zM1139 964h1v1h-1zM1174 964h1v1h-1zM1209 964h1v1h-1zM1244 964h1v1h-1zM1314 964h1v1h-1zM1349 964h1v1h-1zM1384 964h1v1h-1zM1419 964h1v1h-1zM1489 964h1v1h-1zM1524 964h1v1h-1zM1559 964h1v1h-1zM1594 964h1v1h-1zM1664 964h1v1h-1zM1698 964h1v1h-1zM1733 964h1v1h-1zM20 987h1v1h-1zM90 987h1v1h-1zM125 987h1v1h-1zM160 987h1v1h-1zM195 987h1v1h-1zM265 987h1v1h-1zM300 987h1v1h-1zM335 987h1v1h-1zM370 987h1v1h-1zM440 987h1v1h-1zM475 987h1v1h-1zM510 987h1v1h-1zM545 987h1v1h-1zM615 987h1v1h-1zM650 987h1v1h-1zM685 987h1v1h-1zM720 987h1v1h-1zM790 987h1v1h-1zM824 987h1v1h-1zM859 987h1v1h-1zM894 987h1v1h-1zM964 987h1v1h-1zM999 987h1v1h-1zM1034 987h1v1h-1zM1069 987h1v1h-1zM1139 987h1v1h-1zM1174 987h1v1h-1zM1209 987h1v1h-1zM1244 987h1v1h-1zM1314 987h1v1h-1zM1349 987h1v1h-1zM1384 987h1v1h-1zM1419 987h1v1h-1zM1489 987h1v1h-1zM1524 987h1v1h-1zM1559 987h1v1h-1zM1594 987h1v1h-1zM1664 987h1v1h-1zM1698 987h1v1h-1zM1733 987h1v1h-1z" fill="#b4b4b4"/>
<path d="M230 58h1v1h-1zM230 63h1v1h-1zM230 67h1v1h-1zM230 72h1v1h-1zM230 77h1v1h-1zM230 81h1v1h-1zM230 86h1v1h-1zM230 91h1v1h-1zM230 95h1v1h-1zM230 100h1v1h-1zM230 105h1v1h-1zM230 109h1v1h-1zM230 114h1v1h-1zM230 119h1v1h-1zM230 123h1v1h-1zM230 128h1v1h-1zM230 133h1v1h-1zM230 137h1v1h-1zM230 142h1v1h-1zM230 147h1v1h-1zM230 151h1v1h-1zM230 156h1v1h-1zM230 161h1v1h-1zM230 165h1v1h-1zM230 170h1v1h-1zM230 175h1v1h-1zM230 179h1v1h-1zM230 184h1v1h-1zM230 189h1v1h-1zM230 193h1v1h-1zM230 198h1v1h-1zM230 203h1v1h-1zM230 207h1v1h-1zM230 212h1v1h-1zM230 217h1v1h-1zM230 221h1v1h-1zM230 226h1v1h-1zM230 231h1v1h-1zM230 235h1v1h-1zM230 240h1v1h-1zM230 245h1v1h-1zM230 249h1v1h-1zM230 254h1v1h-1zM230 259h1v1h-1zM230 263h1v1h-1zM230 268h1v1h-1zM230 273h1v1h-1zM230 277h1v1h-1zM230 282h1v1h-1zM230 287h1v1h-1zM230 291h1v1h-1zM230 296h1v1h-1zM230 301h1v1h-1zM230 305h1v1h-1zM230 310h1v1h-1zM230 315h1v1h-1zM230 319h1v1h-1zM230 324h1v1h-1zM230 329h1v1h-1zM230 333h1v1h-1zM230 338h1v1h-1zM230 343h1v1h-1zM230 347h1v1h-1zM230 352h1v1h-1zM230 357h1v1h-1zM230 361h1v1h-1zM230 366h1v1h-1zM230 371h1v1h-1zM230 375h1v1h-1zM230 380h1v1h-1zM230 385h1v1h-1zM230 389h1v1h-1zM230 394h1v1h-1zM230 399h1v1h-1zM230 403h1v1h-1zM230 408h1v1h-1zM230 413h1v1h-1zM230 417h1v1h-1zM230 422h1v1h-1zM230 427h1v1h-1zM230 431h1v1h-1zM230 436h1v1h-1zM230 441h1v1h-1zM230 445h1v1h-1zM230 450h1v1h-1zM230 455h1v1h-1zM230 459h1v1h-1zM230 464h1v1h-1zM230 469h1v1h-1zM230 473h1v1h-1zM230 478h1v1h-1zM230 483h1v1h-1zM230 487h1v1h-1zM230 492h1v1h-1zM230 497h1v1h-1zM230 501h1v1h-1zM230 506h1v1h-1zM230 511h1v1h-1zM230 515h1v1h-1zM230 520h1v1h-1zM230 525h1v1h-1zM230 529h1v1h-1zM230 534h1v1h-1zM230 539h1v1h-1zM230 543h1v1h-1zM230 548h1v1h-1zM230 553h1v1h-1zM230 557h1v1h-1zM230 562h1v1h-1zM230 567h1v1h-1zM230 571h1v1h-1zM230 576h1v1h-1zM230 581h1v1h-1zM230 585h1v1h-1zM230 590h1v1h-1zM230 595h1v1h-1zM230 599h1v1h-1zM230 604h1v1h-1zM230 609h1v1h-1zM230 613h1v1h-1zM230 618h1v1h-1zM230 623h1v1h-1zM230 627h1v1h-1zM230 632h1v1h-1zM230 637h1v1h-1zM230 641h1v1h-1zM230 646h1v1h-1zM230 651h1v1h-1zM230 655h1v1h-1zM230 660h1v1h-1zM230 665h1v1h-1zM230 669h1v1h-1zM230 674h1v1h-1zM230 679h1v1h-1zM230 683h1v1h-1zM230 688h1v1h-1zM230 693h1v1h-1zM230 697h1v1h-1zM230 702h1v1h-1zM230 707h1v1h-1zM230 711h1v1h-1zM230 716h1v1h-1zM230 721h1v1h-1zM230 725h1v1h-1zM230 730h1v1h-1zM230 735h1v1h-1zM230 739h1v1h-1zM230 744h1v1h-1zM230 749h1v1h-1zM230 753h1v1h-1zM230 758h1v1h-1zM230 763h1v1h-1zM230 767h1v1h-1zM230 772h1v1h-1zM230 777h1v1h-1zM230 781h1v1h-1zM230 786h1v1h-1zM230 791h1v1h-1zM230 795h1v1h-1zM230 800h1v1h-1zM230 805h1v1h-1zM230 809h1v1h-1zM230 814h1v1h-1zM230 819h1v1h-1zM230 823h1v1h-1zM230 828h1v1h-1zM230 833h1v1h-1zM230 837h1v1h-1zM230 842h1v1h-1zM230 847h1v1h-1zM230 851h1v1h-1zM230 856h1v1h-1zM230 861h1v1h-1zM230 865h1v1h-1zM230 870h1v1h-1zM230 875h1v1h-1zM230 879h1v1h-1zM230 884h1v1h-1zM230 889h1v1h-1zM230 893h1v1h-1zM230 898h1v1h-1zM230 903h1v1h-1zM230 907h1v1h-1zM230 912h1v1h-1zM230 917h1v1h-1zM230 921h1v1h-1zM230 926h1v1h-1zM230 931h1v1h-1zM230 935h1v1h-1zM230 940h1v1h-1zM230 945h1v1h-1zM230 949h1v1h-1zM230 954h1v1h-1zM230 959h1v1h-1zM230 963h1v1h-1zM230 968h1v1h-1zM230 973h1v1h-1zM230 977h1v1h-1zM230 982h1v1h-1zM230 987h1v1h-1zM405 58h1v1h-1zM405 63h1v1h-1zM405 67h1v1h-1zM405 72h1v1h-1zM405 77h1v1h-1zM405 81h1v1h-1zM405 86h1v1h-1zM405 91h1v1h-1zM405 95h1v1h-1zM405 100h1v1h-1zM405 105h1v1h-1zM405 109h1v1h-1zM405 114h1v1h-1zM405 119h1v1h-1zM405 123h1v1h-1zM405 128h1v1h-1zM405 133h1v1h-1zM405 137h1v1h-1zM405 142h1v1h-1zM405 147h1v1h-1zM405 151h1v1h-1zM405 156h1v1h-1zM405 161h1v1h-1zM405 165h1v1h-1zM405 170h1v1h-1zM405 175h1v1h-1zM405 179h1v1h-1zM405 184h1v1h-1zM405 189h1v1h-1zM405 193h1v1h-1zM405 198h1v1h-1zM405 203h1v1h-1zM405 207h1v1h-1zM405 212h1v1h-1zM405 217h1v1h-1zM405 221h1v1h-1zM405 226h1v1h-1zM405 231h1v1h-1zM405 235h1v1h-1zM405 240h1v1h-1zM405 245h1v1h-1zM405 249h1v1h-1zM405 254h1v1h-1zM405 259h1v1h-1zM405 263h1v1h-1zM405 268h1v1h-1zM405 273h1v1h-1zM405 277h1v1h-1zM405 282h1v1h-1zM405 287h1v1h-1zM405 291h1v1h-1zM405 296h1v1h-1zM405 301h1v1h-1zM405 305h1v1h-1zM405 310h1v1h-1zM405 315h1v1h-1zM405 319h1v1h-1zM405 324h1v1h-1zM405 329h1v1h-1zM405 333h1v1h-1zM405 338h1v1h-1zM405 343h1v1h-1zM405 347h1v1h-1zM405 352h1v1h-1zM405 357h1v1h-1zM405 361h1v1h-1zM405 366h1v1h-1zM405 371h1v1h-1zM405 375h1v1h-1zM405 380h1v1h-1zM405 385h1v1h-1zM405 389h1v1h-1zM405 394h1v1h-1zM405 399h1v1h-1zM405 403h1v1h-1zM405 408h1v1h-1zM405 413h1v1h-1zM405 417h1v1h-1zM405 422h1v1h-1zM405 427h1v1h-1zM405 431h1v1h-1zM405 436h1v1h-1zM405 441h1v1h-1zM405 445h1v1h-1zM405 450h1v1h-1zM405 455h1v1h-1zM405 459h1v1h-1zM405 464h1v1h-1zM405 469h1v1h-1zM405 473h1v1h-1zM405 478h1v1h-1zM405 483h1v1h-1zM405 487h1v1h-1zM405 492h1v1h-1zM405 497h1v1h-1zM405 501h1v1h-1zM405 506h1v1h-1zM405 511h1v1h-1zM405 515h1v1h-1zM405 520h1v1h-1zM405 525h1v1h-1zM405 529h1v1h-1zM405 534h1v1h-1zM405 539h1v1h-1zM405 543h1v1h-1zM405 548h1v1h-1zM405 553h1v1h-1zM405 557h1v1h-1zM405 562h1v1h-1zM405 567h1v1h-1zM405 571h1v1h-1zM405 576h1v1h-1zM405 581h1v1h-1zM405 585h1v1h-1zM405 590h1v1h-1zM405 595h1v1h-1zM405 599h1v1h-1zM405 604h1v1h-1zM405 609h1v1h-1zM405 613h1v1h-1zM405 618h1v1h-1zM405 623h1v1h-1zM405 627h1v1h-1zM405 632h1v1h-1zM405 637h1v1h-1zM405 641h1v1h-1zM405 646h1v1h-1zM405 651h1v1h-1zM405 655h1v1h-1zM405 660h1v1h-1zM405 665h1v1h-1zM405 669h1v1h-1zM405 674h1v1h-1zM405 679h1v1h-1zM405 683h1v1h-1zM405 688h1v1h-1zM405 693h1v1h-1zM405 697h1v1h-1zM405 702h1v1h-1zM405 707h1v1h-1zM405 711h1v1h-1zM405 716h1v1h-1zM405 721h1v1h-1zM405 725h1v1h-1zM405 730h1v1h-1zM405 735h1v1h-1zM405 739h1v1h-1zM405 744h1v1h-1zM405 749h1v1h-1zM405 753h1v1h-1zM405 758h1v1h-1zM405 763h1v1h-1zM405 767h1v1h-1zM405 772h1v1h-1zM405 777h1v1h-1zM405 781h1v1h-1zM405 786h1v1h-1zM405 791h1v1h-1zM405 795h1v1h-1zM405 800h1v1h-1zM405 805h1v1h-1zM405 809h1v1h-1zM405 814h1v1h-1zM405 819h1v1h-1zM405 823h1v1h-1zM405 828h1v1h-1zM405 833h1v1h-1zM405 837h1v1h-1zM405 842h1v1h-1zM405 847h1v1h-1zM405 851h1v1h-1zM405 856h1v1h-1zM405 861h1v1h-1zM405 865h1v1h-1zM405 870h1v1h-1zM405 875h1v1h-1zM405 879h1v1h-1zM405 884h1v1h-1zM405 889h1v1h-1zM405 893h1v1h-1zM405 898h1v1h-1zM405 903h1v1h-1zM405 907h1v1h-1zM405 912h1v1h-1zM405 917h1v1h-1zM405 921h1v1h-1zM405 926h1v1h-1zM405 931h1v1h-1zM405 935h1v1h-1zM405 940h1v1h-1zM405 945h1v1h-1zM405 949h1v1h-1zM405 954h1v1h-1zM405 959h1v1h-1zM405 963h1v1h-1zM405 968h1v1h-1zM405 973h1v1h-1zM405 977h1v1h-1zM405 982h1v1h-1zM405 987h1v1h-1zM580 58h1v1h-1zM580 63h1v1h-1zM580 67h1v1h-1zM580 72h1v1h-1zM580 77h1v1h-1zM580 81h1v1h-1zM580 86h1v1h-1zM580 91h1v1h-1zM580 95h1v1h-1zM580 100h1v1h-1zM580 105h1v1h-1zM580 109h1v1h-1zM580 114h1v1h-1zM580 119h1v1h-1zM580 123h1v1h-1zM580 128h1v1h-1zM580 133h1v1h-1zM580 137h1v1h-1zM580 142h1v1h-1zM580 147h1v1h-1zM580 151h1v1h-1zM580 156h1v1h-1zM580 161h1v1h-1zM580 165h1v1h-1zM580 170h1v1h-1zM580 175h1v1h-1zM580 179h1v1h-1zM580 184h1v1h-1zM580 189h1v1h-1zM580 193h1v1h-1zM580 198h1v1h-1zM580 203h1v1h-1zM580 207h1v1h-1zM580 212h1v1h-1zM580 217h1v1h-1zM580 221h1v1h-1zM580 226h1v1h-1zM580 231h1v1h-1zM580 235h1v1h-1zM580 240h1v1h-1zM580 245h1v1h-1zM580 249h1v1h-1zM580 254h1v1h-1zM580 259h1v1h-1zM580 263h1v1h-1zM580 268h1v1h-1zM580 273h1v1h-1zM580 277h1v1h-1zM580 282h1v1h-1zM580 287h1v1h-1zM580 291h1v1h-1zM580 296h1v1h-1zM580 301h1v1h-1zM580 305h1v1h-1zM580 310h1v1h-1zM580 315h1v1h-1zM580 319h1v1h-1zM580 324h1v1h-1zM580 329h1v1h-1zM580 333h1v1h-1zM580 338h1v1h-1zM580 343h1v1h-1zM580 347h1v1h-1zM580 352h1v1h-1zM580 357h1v1h-1zM580 361h1v1h-1zM580 366h1v1h-1zM580 371h1v1h-1zM580 375h1v1h-1zM580 380h1v1h-1zM580 385h1v1h-1zM580 389h1v1h-1zM580 394h1v1h-1zM580 399h1v1h-1zM580 403h1v1h-1zM580 408h1v1h-1zM580 413h1v1h-1zM580 417h1v1h-1zM580 422h1v1h-1zM580 427h1v1h-1zM580 431h1v1h-1zM580 436h1v1h-1zM580 441h1v1h-1zM580 445h1v1h-1zM580 450h1v1h-1zM580 455h1v1h-1zM580 459h1v1h-1zM580 464h1v1h-1zM580 469h1v1h-1zM580 473h1v1h-1zM580 478h1v1h-1zM580 483h1v1h-1zM580 487h1v1h-1zM580 492h1v1h-1zM580 497h1v1h-1zM580 501h1v1h-1zM580 506h1v1h-1zM580 511h1v1h-1zM580 515h1v1h-1zM580 520h1v1h-1zM580 525h1v1h-1zM580 529h1v1h-1zM580 534h1v1h-1zM580 539h1v1h-1zM580 543h1v1h-1zM580 548h1v1h-1zM580 553h1v1h-1zM580 557h1v1h-1zM580 562h1v1h-1zM580 567h1v1h-1zM580 571h1v1h-1zM580 576h1v1h-1zM580 581h1v1h-1zM580 585h1v1h-1zM580 590h1v1h-1zM580 595h1v1h-1zM580 599h1v1h-1zM580 604h1v1h-1zM580 609h1v1h-1zM580 613h1v1h-1zM580 618h1v1h-1zM580 623h1v1h-1zM580 627h1v1h-1zM580 632h1v1h-1zM580 637h1v1h-1zM580 641h1v1h-1zM580 646h1v1h-1zM580 651h1v1h-1zM580 655h1v1h-1zM580 660h1v1h-1zM580 665h1v1h-1zM580 669h1v1h-1zM580 674h1v1h-1zM580 679h1v1h-1zM580 683h1v1h-1zM580 688h1v1h-1zM580 693h1v1h-1zM580 697h1v1h-1zM580 702h1v1h-1zM580 707h1v1h-1zM580 711h1v1h-1zM580 716h1v1h-1zM580 721h1v1h-1zM580 725h1v1h-1zM580 730h1v1h-1zM580 735h1v1h-1zM580 739h1v1h-1zM580 744h1v1h-1zM580 749h1v1h-1zM580 753h1v1h-1zM580 758h1v1h-1zM580 763h1v1h-1zM580 767h1v1h-1zM580 772h1v1h-1zM580 777h1v1h-1zM580 781h1v1h-1zM580 786h1v1h-1zM580 791h1v1h-1zM580 795h1v1h-1zM580 800h1v1h-1zM580 805h1v1h-1zM580 809h1v1h-1zM580 814h1v1h-1zM580 819h1v1h-1zM580 823h1v1h-1zM580 828h1v1h-1zM580 833h1v1h-1zM580 837h1v1h-1zM580 842h1v1h-1zM580 847h1v1h-1zM580 851h1v1h-1zM580 856h1v1h-1zM580 861h1v1h-1zM580 865h1v1h-1zM580 870h1v1h-1zM580 875h1v1h-1zM580 879h1v1h-1zM580 884h1v1h-1zM580 889h1v1h-1zM580 893h1v1h-1zM580 898h1v1h-1zM580 903h1v1h-1zM580 907h1v1h-1zM580 912h1v1h-1zM580 917h1v1h-1zM580 921h1v1h-1zM580 926h1v1h-1zM580 931h1v1h-1zM580 935h1v1h-1zM580 940h1v1h-1zM580 945h1v1h-1zM580 949h1v1h-1zM580 954h1v1h-1zM580 959h1v1h-1zM580 963h1v1h-1zM580 968h1v1h-1zM580 973h1v1h-1zM580 977h1v1h-1zM580 982h1v1h-1zM580 987h1v1h-1zM755 58h1v1h-1zM755 63h1v1h-1zM755 67h1v1h-1zM755 72h1v1h-1zM755 77h1v1h-1zM755 81h1v1h-1zM755 86h1v1h-1zM755 91h1v1h-1zM755 95h1v1h-1zM755 100h1v1h-1zM755 105h1v1h-1zM755 109h1v1h-1zM755 114h1v1h-1zM755 119h1v1h-1zM755 123h1v1h-1zM755 128h1v1h-1zM755 133h1v1h-1zM755 137h1v1h-1zM755 142h1v1h-1zM755 147h1v1h-1zM755 151h1v1h-1zM755 156h1v1h-1zM755 161h1v1h-1zM755 165h1v1h-1zM755 170h1v1h-1zM755 175h1v1h-1zM755 179h1v1h-1zM755 184h1v1h-1zM755 189h1v1h-1zM755 193h1v1h-1zM755 198h1v1h-1zM755 203h1v1h-1zM755 207h1v1h-1zM755 212h1v1h-1zM755 217h1v1h-1zM755 221h1v1h-1zM755 226h1v1h-1zM755 231h1v1h-1zM755 235h1v1h-1zM755 240h1v1h-1zM755 245h1v1h-1zM755 249h1v1h-1zM755 254h1v1h-1zM755 259h1v1h-1zM755 263h1v1h-1zM755 268h1v1h-1zM755 273h1v1h-1zM755 277h1v1h-1zM755 282h1v1h-1zM755 287h1v1h-1zM755 291h1v1h-1zM755 296h1v1h-1zM755 301h1v1h-1zM755 305h1v1h-1zM755 310h1v1h-1zM755 315h1v1h-1zM755 319h1v1h-1zM755 324h1v1h-1zM755 329h1v1h-1zM755 333h1v1h-1zM755 338h1v1h-1zM755 343h1v1h-1zM755 347h1v1h-1zM755 352h1v1h-1zM755 357h1v1h-1zM755 361h1v1h-1zM755 366h1v1h-1zM755 371h1v1h-1zM755 375h1v1h-1zM755 380h1v1h-1zM755 385h1v1h-1zM755 389h1v1h-1zM755 394h1v1h-1zM755 399h1v1h-1zM755 403h1v1h-1zM755 408h1v1h-1zM755 413h1v1h-1zM755 417h1v1h-1zM755 422h1v1h-1zM755 427h1v1h-1zM755 431h1v1h-1zM755 436h1v1h-1zM755 441h1v1h-1zM755 445h1v1h-1zM755 450h1v1h-1zM755 455h1v1h-1zM755 459h1v1h-1zM755 464h1v1h-1zM755 469h1v1h-1zM755 473h1v1h-1zM755 478h1v1h-1zM755 483h1v1h-1zM755 487h1v1h-1zM755 492h1v1h-1zM755 497h1v1h-1zM755 501h1v1h-1zM755 506h1v1h-1zM755 511h1v1h-1zM755 515h1v1h-1zM755 520h1v1h-1zM755 525h1v1h-1zM755 529h1v1h-1zM755 534h1v1h-1zM755 539h1v1h-1zM755 543h1v1h-1zM755 548h1v1h-1zM755 553h1v1h-1zM755 557h1v1h-1zM755 562h1v1h-1zM755 567h1v1h-1zM755 571h1v1h-1zM755 576h1v1h-1zM755 581h1v1h-1zM755 585h1v1h-1zM755 590h1v1h-1zM755 595h1v1h-1zM755 599h1v1h-1zM755 604h1v1h-1zM755 609h1v1h-1zM755 613h1v1h-1zM755 618h1v1h-1zM755 623h1v1h-1zM755 627h1v1h-1zM755 632h1v1h-1zM755 637h1v1h-1zM755 641h1v1h-1zM755 646h1v1h-1zM755 651h1v1h-1zM755 655h1v1h-1zM755 660h1v1h-1zM755 665h1v1h-1zM755 669h1v1h-1zM755 674h1v1h-1zM755 679h1v1h-1zM755 683h1v1h-1zM755 688h1v1h-1zM755 693h1v1h-1zM755 697h1v1h-1zM755 702h1v1h-1zM755 707h1v1h-1zM755 711h1v1h-1zM755 716h1v1h-1zM755 721h1v1h-1zM755 725h1v1h-1zM755 730h1v1h-1zM755 735h1v1h-1zM755 739h1v1h-1zM755 744h1v1h-1zM755 749h1v1h-1zM755 753h1v1h-1zM755 758h1v1h-1zM755 763h1v1h-1zM755 767h1v1h-1zM755 772h1v1h-1zM755 777h1v1h-1zM755 781h1v1h-1zM755 786h1v1h-1zM755 791h1v1h-1zM755 795h1v1h-1zM755 800h1v1h-1zM755 805h1v1h-1zM755 809h1v1h-1zM755 814h1v1h-1zM755 819h1v1h-1zM755 823h1v1h-1zM755 828h1v1h-1zM755 833h1v1h-1zM755 837h1v1h-1zM755 842h1v1h-1zM755 847h1v1h-1zM755 851h1v1h-1zM755 856h1v1h-1zM755 861h1v1h-1zM755 865h1v1h-1zM755 870h1v1h-1zM755 875h1v1h-1zM755 879h1v1h-1zM755 884h1v1h-1zM755 889h1v1h-1zM755 893h1v1h-1zM755 898h1v1h-1zM755 903h1v1h-1zM755 907h1v1h-1zM755 912h1v1h-1zM755 917h1v1h-1zM755 921h1v1h-1zM755 926h1v1h-1zM755 931h1v1h-1zM755 935h1v1h-1zM755 940h1v1h-1zM755 945h1v1h-1zM755 949h1v1h-1zM755 954h1v1h-1zM755 959h1v1h-1zM755 963h1v1h-1zM755 968h1v1h-1zM755 973h1v1h-1zM755 977h1v1h-1zM755 982h1v1h-1zM755 987h1v1h-1zM929 58h1v1h-1zM929 63h1v1h-1zM929 67h1v1h-1zM929 72h1v1h-1zM929 77h1v1h-1zM929 81h1v1h-1zM929 86h1v1h-1zM929 91h1v1h-1zM929 95h1v1h-1zM929 100h1v1h-1zM929 105h1v1h-1zM929 109h1v1h-1zM929 114h1v1h-1zM929 119h1v1h-1zM929 123h1v1h-1zM929 128h1v1h-1zM929 133h1v1h-1zM929 137h1v1h-1zM929 142h1v1h-1zM929 147h1v1h-1zM929 151h1v1h-1zM929 156h1v1h-1zM929 161h1v1h-1zM929 165h1v1h-1zM929 170h1v1h-1zM929 175h1v1h-1zM929 179h1v1h-1zM929 184h1v1h-1zM929 189h1v1h-1zM929 193h1v1h-1zM929 198h1v1h-1zM929 203h1v1h-1zM929 207h1v1h-1zM929 212h1v1h-1zM929 217h1v1h-1zM929 221h1v1h-1zM929 226h1v1h-1zM929 231h1v1h-1zM929 235h1v1h-1zM929 240h1v1h-1zM929 245h1v1h-1zM929 249h1v1h-1zM929 254h1v1h-1zM929 259h1v1h-1zM929 263h1v1h-1zM929 268h1v1h-1zM929 273h1v1h-1zM929 277h1v1h-1zM929 282h1v1h-1zM929 287h1v1h-1zM929 291h1v1h-1zM929 296h1v1h-1zM929 301h1v1h-1zM929 305h1v1h-1zM929 310h1v1h-1zM929 315h1v1h-1zM929 319h1v1h-1zM929 324h1v1h-1zM929 329h1v1h-1zM929 333h1v1h-1zM929 338h1v1h-1zM929 343h1v1h-1zM929 347h1v1h-1zM929 352h1v1h-1zM929 357h1v1h-1zM929 361h1v1h-1zM929 366h1v1h-1zM929 371h1v1h-1zM929 375h1v1h-1zM929 380h1v1h-1zM929 385h1v1h-1zM929 389h1v1h-1zM929 394h1v1h-1zM929 399h1v1h-1zM929 403h1v1h-1zM929 408h1v1h-1zM929 413h1v1h-1zM929 417h1v1h-1zM929 422h1v1h-1zM929 427h1v1h-1zM929 431h1v1h-1zM929 436h1v1h-1zM929 441h1v1h-1zM929 445h1v1h-1zM929 450h1v1h-1zM929 455h1v1h-1zM929 459h1v1h-1zM929 464h1v1h-1zM929 469h1v1h-1zM929 473h1v1h-1zM929 478h1v1h-1zM929 483h1v1h-1zM929 487h1v1h-1zM929 492h1v1h-1zM929 497h1v1h-1zM929 501h1v1h-1zM929 506h1v1h-1zM929 511h1v1h-1zM929 515h1v1h-1zM929 520h1v1h-1zM929 525h1v1h-1zM929 529h1v1h-1zM929 534h1v1h-1zM929 539h1v1h-1zM929 543h1v1h-1zM929 548h1v1h-1zM929 553h1v1h-1zM929 557h1v1h-1zM929 562h1v1h-1zM929 567h1v1h-1zM929 571h1v1h-1zM929 576h1v1h-1zM929 581h1v1h-1zM929 585h1v1h-1zM929 590h1v1h-1zM929 595h1v1h-1zM929 599h1v1h-1zM929 604h1v1h-1zM929 609h1v1h-1zM929 613h1v1h-1zM929 618h1v1h-1zM929 623h1v1h-1zM929 627h1v1h-1zM929 632h1v1h-1zM929 637h1v1h-1zM929 641h1v1h-1zM929 646h1v1h-1zM929 651h1v1h-1zM929 655h1v1h-1zM929 660h1v1h-1zM929 665h1v1h-1zM929 669h1v1h-1zM929 674h1v1h-1zM929 679h1v1h-1zM929 683h1v1h-1zM929 688h1v1h-1zM929 693h1v1h-1zM929 697h1v1h-1zM929 702h1v1h-1zM929 707h1v1h-1zM929 711h1v1h-1zM929 716h1v1h-1zM929 721h1v1h-1zM929 725h1v1h-1zM929 730h1v1h-1zM929 735h1v1h-1zM929 739h1v1h-1zM929 744h1v1h-1zM929 749h1v1h-1zM929 753h1v1h-1zM929 758h1v1h-1zM929 763h1v1h-1zM929 767h1v1h-1zM929 772h1v1h-1zM929 777h1v1h-1zM929 781h1v1h-1zM929 786h1v1h-1zM929 791h1v1h-1zM929 795h1v1h-1zM929 800h1v1h-1zM929 805h1v1h-1zM929 809h1v1h-1zM929 814h1v1h-1zM929 819h1v1h-1zM929 823h1v1h-1zM929 828h1v1h-1zM929 833h1v1h-1zM929 837h1v1h-1zM929 842h1v1h-1zM929 847h1v1h-1zM929 851h1v1h-1zM929 856h1v1h-1zM929 861h1v1h-1zM929 865h1v1h-1zM929 870h1v1h-1zM929 875h1v1h-1zM929 879h1v1h-1zM929 884h1v1h-1zM929 889h1v1h-1zM929 893h1v1h-1zM929 898h1v1h-1zM929 903h1v1h-1zM929 907h1v1h-1zM929 912h1v1h-1zM929 917h1v1h-1zM929 921h1v1h-1zM929 926h1v1h-1zM929 931h1v1h-1zM929 935h1v1h-1zM929 940h1v1h-1zM929 945h1v1h-1zM929 949h1v1h-1zM929 954h1v1h-1zM929 959h1v1h-1zM929 963h1v1h-1zM929 968h1v1h-1zM929 973h1v1h-1zM929 977h1v1h-1zM929 982h1v1h-1zM929 987h1v1h-1zM1104 58h1v1h-1zM1104 63h1v1h-1zM1104 67h1v1h-1zM1104 72h1v1h-1zM1104 77h1v1h-1zM1104 81h1v1h-1zM1104 86h1v1h-1zM1104 91h1v1h-1zM1104 95h1v1h-1zM1104 100h1v1h-1zM1104 105h1v1h-1zM1104 109h1v1h-1zM1104 114h1v1h-1zM1104 119h1v1h-1zM1104 123h1v1h-1zM1104 128h1v1h-1zM1104 133h1v1h-1zM1104 137h1v1h-1zM1104 142h1v1h-1zM1104 147h1v1h-1zM1104 151h1v1h-1zM1104 156h1v1h-1zM1104 161h1v1h-1zM1104 165h1v1h-1zM1104 170h1v1h-1zM1104 175h1v1h-1zM1104 179h1v1h-1zM1104 184h1v1h-1zM1104 189h1v1h-1zM1104 193h1v1h-1zM1104 198h1v1h-1zM1104 203h1v1h-1zM1104 207h1v1h-1zM1104 212h1v1h-1zM1104 217h1v1h-1zM1104 221h1v1h-1zM1104 226h1v1h-1zM1104 231h1v1h-1zM1104 235h1v1h-1zM1104 240h1v1h-1zM1104 245h1v1h-1zM1104 249h1v1h-1zM1104 254h1v1h-1zM1104 259h1v1h-1zM1104 263h1v1h-1zM1104 268h1v1h-1zM1104 273h1v1h-1zM1104 277h1v1h-1zM1104 282h1v1h-1zM1104 287h1v1h-1zM1104 291h1v1h-1zM1104 296h1v1h-1zM1104 301h1v1h-1zM1104 305h1v1h-1zM1104 310h1v1h-1zM1104 315h1v1h-1zM1104 319h1v1h-1zM1104 324h1v1h-1zM1104 329h1v1h-1zM1104 333h1v1h-1zM1104 338h1v1h-1zM1104 343h1v1h-1zM1104 347h1v1h-1zM1104 352h1v1h-1zM1104 357h1v1h-1zM1104 361h1v1h-1zM1104 366h1v1h-1zM1104 371h1v1h-1zM1104 375h1v1h-1zM1104 380h1v1h-1zM1104 385h1v1h-1zM1104 389h1v1h-1zM1104 394h1v1h-1zM1104 399h1v1h-1zM1104 403h1v1h-1zM1104 408h1v1h-1zM1104 413h1v1h-1zM1104 417h1v1h-1zM1104 422h1v1h-1zM1104 427h1v1h-1zM1104 431h1v1h-1zM1104 436h1v1h-1zM1104 441h1v1h-1zM1104 445h1v1h-1zM1104 450h1v1h-1zM1104 455h1v1h-1zM1104 459h1v1h-1zM1104 464h1v1h-1zM1104 469h1v1h-1zM1104 473h1v1h-1zM1104 478h1v1h-1zM1104 483h1v1h-1zM1104 487h1v1h-1zM1104 492h1v1h-1zM1104 497h1v1h-1zM1104 501h1v1h-1zM1104 506h1v1h-1zM1104 511h1v1h-1zM1104 515h1v1h-1zM1104 520h1v1h-1zM1104 525h1v1h-1zM1104 529h1v1h-1zM1104 534h1v1h-1zM1104 539h1v1h-1zM1104 543h1v1h-1zM1104 548h1v1h-1zM1104 553h1v1h-1zM1104 557h1v1h-1zM1104 562h1v1h-1zM1104 567h1v1h-1zM1104 571h1v1h-1zM1104 576h1v1h-1zM1104 581h1v1h-1zM1104 585h1v1h-1zM1104 590h1v1h-1zM1104 595h1v1h-1zM1104 599h1v1h-1zM1104 604h1v1h-1zM1104 609h1v1h-1zM1104 613h1v1h-1zM1104 618h1v1h-1zM1104 623h1v1h-1zM1104 627h1v1h-1zM1104 632h1v1h-1zM1104 637h1v1h-1zM1104 641h1v1h-1zM1104 646h1v1h-1zM1104 651h1v1h-1zM1104 655h1v1h-1zM1104 660h1v1h-1zM1104 665h1v1h-1zM1104 669h1v1h-1zM1104 674h1v1h-1zM1104 679h1v1h-1zM1104 683h1v1h-1zM1104 688h1v1h-1zM1104 693h1v1h-1zM1104 697h1v1h-1zM1104 702h1v1h-1zM1104 707h1v1h-1zM1104 711h1v1h-1zM1104 716h1v1h-1zM1104 721h1v1h-1zM1104 725h1v1h-1zM1104 730h1v1h-1zM1104 735h1v1h-1zM1104 739h1v1h-1zM1104 744h1v1h-1zM1104 749h1v1h-1zM1104 753h1v1h-1zM1104 758h1v1h-1zM1104 763h1v1h-1zM1104 767h1v1h-1zM1104 772h1v1h-1zM1104 777h1v1h-1zM1104 781h1v1h-1zM1104 786h1v1h-1zM1104 791h1v1h-1zM1104 795h1v1h-1zM1104 800h1v1h-1zM1104 805h1v1h-1zM1104 809h1v1h-1zM1104 814h1v1h-1zM1104 819h1v1h-1zM1104 823h1v1h-1zM1104 828h1v1h-1zM1104 833h1v1h-1zM1104 837h1v1h-1zM1104 842h1v1h-1zM1104 847h1v1h-1zM1104 851h1v1h-1zM1104 856h1v1h-1zM1104 861h1v1h-1zM1104 865h1v1h-1zM1104 870h1v1h-1zM1104 875h1v1h-1zM1104 879h1v1h-1zM1104 884h1v1h-1zM1104 889h1v1h-1zM1104 893h1v1h-1zM1104 898h1v1h-1zM1104 903h1v1h-1zM1104 907h1v1h-1zM1104 912h1v1h-1zM1104 917h1v1h-1zM1104 921h1v1h-1zM1104 926h1v1h-1zM1104 931h1v1h-1zM1104 935h1v1h-1zM1104 940h1v1h-1zM1104 945h1v1h-1zM1104 949h1v1h-1zM1104 954h1v1h-1zM1104 959h1v1h-1zM1104 963h1v1h-1zM1104 968h1v1h-1zM1104 973h1v1h-1zM1104 977h1v1h-1zM1104 982h1v1h-1zM1104 987h1v1h-1zM1279 58h1v1h-1zM1279 63h1v1h-1zM1279 67h1v1h-1zM1279 72h1v1h-1zM1279 77h1v1h-1zM1279 81h1v1h-1zM1279 86h1v1h-1zM1279 91h1v1h-1zM1279 95h1v1h-1zM1279 100h1v1h-1zM1279 105h1v1h-1zM1279 109h1v1h-1zM1279 114h1v1h-1zM1279 119h1v1h-1zM1279 123h1v1h-1zM1279 128h1v1h-1zM1279 133h1v1h-1zM1279 137h1v1h-1zM1279 142h1v1h-1zM1279 147h1v1h-1zM1279 151h1v1h-1zM1279 156h1v1h-1zM1279 161h1v1h-1zM1279 165h1v1h-1zM1279 170h1v1h-1zM1279 175h1v1h-1zM1279 179h1v1h-1zM1279 184h1v1h-1zM1279 189h1v1h-1zM1279 193h1v1h-1zM1279 198h1v1h-1zM1279 203h1v1h-1zM1279 207h1v1h-1zM1279 212h1v1h-1zM1279 217h1v1h-1zM1279 221h1v1h-1zM1279 226h1v1h-1zM1279 231h1v1h-1zM1279 235h1v1h-1zM1279 240h1v1h-1zM1279 245h1v1h-1zM1279 249h1v1h-1zM1279 254h1v1h-1zM1279 259h1v1h-1zM1279 263h1v1h-1zM1279 268h1v1h-1zM1279 273h1v1h-1zM1279 277h1v1h-1zM1279 282h1v1h-1zM1279 287h1v1h-1zM1279 291h1v1h-1zM1279 296h1v1h-1zM1279 301h1v1h-1zM1279 305h1v1h-1zM1279 310h1v1h-1zM1279 315h1v1h-1zM1279 319h1v1h-1zM1279 324h1v1h-1zM1279 329h1v1h-1zM1279 333h1v1h-1zM1279 338h1v1h-1zM1279 343h1v1h-1zM1279 347h1v1h-1zM1279 352h1v1h-1zM1279 357h1v1h-1zM1279 361h1v1h-1zM1279 366h1v1h-1zM1279 371h1v1h-1zM1279 375h1v1h-1zM1279 380h1v1h-1zM1279 385h1v1h-1zM1279 389h1v1h-1zM1279 394h1v1h-1zM1279 399h1v1h-1zM1279 403h1v1h-1zM1279 408h1v1h-1zM1279 413h1v1h-1zM1279 417h1v1h-1zM1279 422h1v1h-1zM1279 427h1v1h-1zM1279 431h1v1h-1zM1279 436h1v1h-1zM1279 441h1v1h-1zM1279 445h1v1h-1zM1279 450h1v1h-1zM1279 455h1v1h-1zM1279 459h1v1h-1zM1279 464h1v1h-1zM1279 469h1v1h-1zM1279 473h1v1h-1zM1279 478h1v1h-1zM1279 483h1v1h-1zM1279 487h1v1h-1zM1279 492h1v1h-1zM1279 497h1v1h-1zM1279 501h1v1h-1zM1279 506h1v1h-1zM1279 511h1v1h-1zM1279 515h1v1h-1zM1279 520h1v1h-1zM1279 525h1v1h-1zM1279 529h1v1h-1zM1279 534h1v1h-1zM1279 539h1v1h-1zM1279 543h1v1h-1zM1279 548h1v1h-1zM1279 553h1v1h-1zM1279 557h1v1h-1zM1279 562h1v1h-1zM1279 567h1v1h-1zM1279 571h1v1h-1zM1279 576h1v1h-1zM1279 581h1v1h-1zM1279 585h1v1h-1zM1279 590h1v1h-1zM1279 595h1v1h-1zM1279 599h1v1h-1zM1279 604h1v1h-1zM1279 609h1v1h-1zM1279 613h1v1h-1zM1279 618h1v1h-1zM1279 623h1v1h-1zM1279 627h1v1h-1zM1279 632h1v1h-1zM1279 637h1v1h-1zM1279 641h1v1h-1zM1279 646h1v1h-1zM1279 651h1v1h-1zM1279 655h1v1h-1zM1279 660h1v1h-1zM1279 665h1v1h-1zM1279 669h1v1h-1zM1279 674h1v1h-1zM1279 679h1v1h-1zM1279 683h1v1h-1zM1279 688h1v1h-1zM1279 693h1v1h-1zM1279 697h1v1h-1zM1279 702h1v1h-1zM1279 707h1v1h-1zM1279 711h1v1h-1zM1279 716h1v1h-1zM1279 721h1v1h-1zM1279 725h1v1h-1zM1279 730h1v1h-1zM1279 735h1v1h-1zM1279 739h1v1h-1zM1279 744h1v1h-1zM1279 749h1v1h-1zM1279 753h1v1h-1zM1279 758h1v1h-1zM1279 763h1v1h-1zM1279 767h1v1h-1zM1279 772h1v1h-1zM1279 777h1v1h-1zM1279 781h1v1h-1zM1279 786h1v1h-1zM1279 791h1v1h-1zM1279 795h1v1h-1zM1279 800h1v1h-1zM1279 805h1v1h-1zM1279 809h1v1h-1zM1279 814h1v1h-1zM1279 819h1v1h-1zM1279 823h1v1h-1zM1279 828h1v1h-1zM1279 833h1v1h-1zM1279 837h1v1h-1zM1279 842h1v1h-1zM1279 847h1v1h-1zM1279 851h1v1h-1zM1279 856h1v1h-1zM1279 861h1v1h-1zM1279 865h1v1h-1zM1279 870h1v1h-1zM1279 875h1v1h-1zM1279 879h1v1h-1zM1279 884h1v1h-1zM1279 889h1v1h-1zM1279 893h1v1h-1zM1279 898h1v1h-1zM1279 903h1v1h-1zM1279 907h1v1h-1zM1279 912h1v1h-1zM1279 917h1v1h-1zM1279 921h1v1h-1zM1279 926h1v1h-1zM1279 931h1v1h-1zM1279 935h1v1h-1zM1279 940h1v1h-1zM1279 945h1v1h-1zM1279 949h1v1h-1zM1279 954h1v1h-1zM1279 959h1v1h-1zM1279 963h1v1h-1zM1279 968h1v1h-1zM1279 973h1v1h-1zM1279 977h1v1h-1zM1279 982h1v1h-1zM1279 987h1v1h-1zM1454 58h1v1h-1zM1454 63h1v1h-1zM1454 67h1v1h-1zM1454 72h1v1h-1zM1454 77h1v1h-1zM1454 81h1v1h-1zM1454 86h1v1h-1zM1454 91h1v1h-1zM1454 95h1v1h-1zM1454 100h1v1h-1zM1454 105h1v1h-1zM1454 109h1v1h-1zM1454 114h1v1h-1zM1454 119h1v1h-1zM1454 123h1v1h-1zM1454 128h1v1h-1zM1454 133h1v1h-1zM1454 137h1v1h-1zM1454 142h1v1h-1zM1454 147h1v1h-1zM1454 151h1v1h-1zM1454 156h1v1h-1zM1454 161h1v1h-1zM1454 165h1v1h-1zM1454 170h1v1h-1zM1454 175h1v1h-1zM1454 179h1v1h-1zM1454 184h1v1h-1zM1454 189h1v1h-1zM1454 193h1v1h-1zM1454 198h1v1h-1zM1454 203h1v1h-1zM1454 207h1v1h-1zM1454 212h1v1h-1zM1454 217h1v1h-1zM1454 221h1v1h-1zM1454 226h1v1h-1zM1454 231h1v1h-1zM1454 235h1v1h-1zM1454 240h1v1h-1zM1454 245h1v1h-1zM1454 249h1v1h-1zM1454 254h1v1h-1zM1454 259h1v1h-1zM1454 263h1v1h-1zM1454 268h1v1h-1zM1454 273h1v1h-1zM1454 277h1v1h-1zM1454 282h1v1h-1zM1454 287h1v1h-1zM1454 291h1v1h-1zM1454 296h1v1h-1zM1454 301h1v1h-1zM1454 305h1v1h-1zM1454 310h1v1h-1zM1454 315h1v1h-1zM1454 319h1v1h-1zM1454 324h1v1h-1zM1454 329h1v1h-1zM1454 333h1v1h-1zM1454 338h1v1h-1zM1454 343h1v1h-1zM1454 347h1v1h-1zM1454 352h1v1h-1zM1454 357h1v1h-1zM1454 361h1v1h-1zM1454 366h1v1h-1zM1454 371h1v1h-1zM1454 375h1v1h-1zM1454 380h1v1h-1zM1454 385h1v1h-1zM1454 389h1v1h-1zM1454 394h1v1h-1zM1454 399h1v1h-1zM1454 403h1v1h-1zM1454 408h1v1h-1zM1454 413h1v1h-1zM1454 417h1v1h-1zM1454 422h1v1h-1zM1454 427h1v1h-1zM1454 431h1v1h-1zM1454 436h1v1h-1zM1454 441h1v1h-1zM1454 445h1v1h-1zM1454 450h1v1h-1zM1454 455h1v1h-1zM1454 459h1v1h-1zM1454 464h1v1h-1zM1454 469h1v1h-1zM1454 473h1v1h-1zM1454 478h1v1h-1zM1454 483h1v1h-1zM1454 487h1v1h-1zM1454 492h1v1h-1zM1454 497h1v1h-1zM1454 501h1v1h-1zM1454 506h1v1h-1zM1454 511h1v1h-1zM1454 515h1v1h-1zM1454 520h1v1h-1zM1454 525h1v1h-1zM1454 529h1v1h-1zM1454 534h1v1h-1zM1454 539h1v1h-1zM1454 543h1v1h-1zM1454 548h1v1h-1zM1454 553h1v1h-1zM1454 557h1v1h-1zM1454 562h1v1h-1zM1454 567h1v1h-1zM1454 571h1v1h-1zM1454 576h1v1h-1zM1454 581h1v1h-1zM1454 585h1v1h-1zM1454 590h1v1h-1zM1454 595h1v1h-1zM1454 599h1v1h-1zM1454 604h1v1h-1zM1454 609h1v1h-1zM1454 613h1v1h-1zM1454 618h1v1h-1zM1454 623h1v1h-1zM1454 627h1v1h-1zM1454 632h1v1h-1zM1454 637h1v1h-1zM1454 641h1v1h-1zM1454 646h1v1h-1zM1454 651h1v1h-1zM1454 655h1v1h-1zM1454 660h1v1h-1zM1454 665h1v1h-1zM1454 669h1v1h-1zM1454 674h1v1h-1zM1454 679h1v1h-1zM1454 683h1v1h-1zM1454 688h1v1h-1zM1454 693h1v1h-1zM1454 697h1v1h-1zM1454 702h1v1h-1zM1454 707h1v1h-1zM1454 711h1v1h-1zM1454 716h1v1h-1zM1454 721h1v1h-1zM1454 725h1v1h-1zM1454 730h1v1h-1zM1454 735h1v1h-1zM1454 739h1v1h-1zM1454 744h1v1h-1zM1454 749h1v1h-1zM1454 753h1v1h-1zM1454 758h1v1h-1zM1454 763h1v1h-1zM1454 767h1v1h-1zM1454 772h1v1h-1zM1454 777h1v1h-1zM1454 781h1v1h-1zM1454 786h1v1h-1zM1454 791h1v1h-1zM1454 795h1v1h-1zM1454 800h1v1h-1zM1454 805h1v1h-1zM1454 809h1v1h-1zM1454 814h1v1h-1zM1454 819h1v1h-1zM1454 823h1v1h-1zM1454 828h1v1h-1zM1454 833h1v1h-1zM1454 837h1v1h-1zM1454 842h1v1h-1zM1454 847h1v1h-1zM1454 851h1v1h-1zM1454 856h1v1h-1zM1454 861h1v1h-1zM1454 865h1v1h-1zM1454 870h1v1h-1zM1454 875h1v1h-1zM1454 879h1v1h-1zM1454 884h1v1h-1zM1454 889h1v1h-1zM1454 893h1v1h-1zM1454 898h1v1h-1zM1454 903h1v1h-1zM1454 907h1v1h-1zM1454 912h1v1h-1zM1454 917h1v1h-1zM1454 921h1v1h-1zM1454 926h1v1h-1zM1454 931h1v1h-1zM1454 935h1v1h-1zM1454 940h1v1h-1zM1454 945h1v1h-1zM1454 949h1v1h-1zM1454 954h1v1h-1zM1454 959h1v1h-1zM1454 963h1v1h-1zM1454 968h1v1h-1zM1454 973h1v1h-1zM1454 977h1v1h-1zM1454 982h1v1h-1zM1454 987h1v1h-1zM1629 58h1v1h-1zM1629 63h1v1h-1zM1629 67h1v1h-1zM1629 72h1v1h-1zM1629 77h1v1h-1zM1629 81h1v1h-1zM1629 86h1v1h-1zM1629 91h1v1h-1zM1629 95h1v1h-1zM1629 100h1v1h-1zM1629 105h1v1h-1zM1629 109h1v1h-1zM1629 114h1v1h-1zM1629 119h1v1h-1zM1629 123h1v1h-1zM1629 128h1v1h-1zM1629 133h1v1h-1zM1629 137h1v1h-1zM1629 142h1v1h-1zM1629 147h1v1h-1zM1629 151h1v1h-1zM1629 156h1v1h-1zM1629 161h1v1h-1zM1629 165h1v1h-1zM1629 170h1v1h-1zM1629 175h1v1h-1zM1629 179h1v1h-1zM1629 184h1v1h-1zM1629 189h1v1h-1zM1629 193h1v1h-1zM1629 198h1v1h-1zM1629 203h1v1h-1zM1629 207h1v1h-1zM1629 212h1v1h-1zM1629 217h1v1h-1zM1629 221h1v1h-1zM1629 226h1v1h-1zM1629 231h1v1h-1zM1629 235h1v1h-1zM1629 240h1v1h-1zM1629 245h1v1h-1zM1629 249h1v1h-1zM1629 254h1v1h-1zM1629 259h1v1h-1zM1629 263h1v1h-1zM1629 268h1v1h-1zM1629 273h1v1h-1zM1629 277h1v1h-1zM1629 282h1v1h-1zM1629 287h1v1h-1zM1629 291h1v1h-1zM1629 296h1v1h-1zM1629 301h1v1h-1zM1629 305h1v1h-1zM1629 310h1v1h-1zM1629 315h1v1h-1zM1629 319h1v1h-1zM1629 324h1v1h-1zM1629 329h1v1h-1zM1629 333h1v1h-1zM1629 338h1v1h-1zM1629 343h1v1h-1zM1629 347h1v1h-1zM1629 352h1v1h-1zM1629 357h1v1h-1zM1629 361h1v1h-1zM1629 366h1v1h-1zM1629 371h1v1h-1zM1629 375h1v1h-1zM1629 380h1v1h-1zM1629 385h1v1h-1zM1629 389h1v1h-1zM1629 394h1v1h-1zM1629 399h1v1h-1zM1629 403h1v1h-1zM1629 408h1v1h-1zM1629 413h1v1h-1zM1629 417h1v1h-1zM1629 422h1v1h-1zM1629 427h1v1h-1zM1629 431h1v1h-1zM1629 436h1v1h-1zM1629 441h1v1h-1zM1629 445h1v1h-1zM1629 450h1v1h-1zM1629 455h1v1h-1zM1629 459h1v1h-1zM1629 464h1v1h-1zM1629 469h1v1h-1zM1629 473h1v1h-1zM1629 478h1v1h-1zM1629 483h1v1h-1zM1629 487h1v1h-1zM1629 492h1v1h-1zM1629 497h1v1h-1zM1629 501h1v1h-1zM1629 506h1v1h-1zM1629 511h1v1h-1zM1629 515h1v1h-1zM1629 520h1v1h-1zM1629 525h1v1h-1zM1629 529h1v1h-1zM1629 534h1v1h-1zM1629 539h1v1h-1zM1629 543h1v1h-1zM1629 548h1v1h-1zM1629 553h1v1h-1zM1629 557h1v1h-1zM1629 562h1v1h-1zM1629 567h1v1h-1zM1629 571h1v1h-1zM1629 576h1v1h-1zM1629 581h1v1h-1zM1629 585h1v1h-1zM1629 590h1v1h-1zM1629 595h1v1h-1zM1629 599h1v1h-1zM1629 604h1v1h-1zM1629 609h1v1h-1zM1629 613h1v1h-1zM1629 618h1v1h-1zM1629 623h1v1h-1zM1629 627h1v1h-1zM1629 632h1v1h-1zM1629 637h1v1h-1zM1629 641h1v1h-1zM1629 646h1v1h-1zM1629 651h1v1h-1zM1629 655h1v1h-1zM1629 660h1v1h-1zM1629 665h1v1h-1zM1629 669h1v1h-1zM1629 674h1v1h-1zM1629 679h1v1h-1zM1629 683h1v1h-1zM1629 688h1v1h-1zM1629 693h1v1h-1zM1629 697h1v1h-1zM1629 702h1v1h-1zM1629 707h1v1h-1zM1629 711h1v1h-1zM1629 716h1v1h-1zM1629 721h1v1h-1zM1629 725h1v1h-1zM1629 730h1v1h-1zM1629 735h1v1h-1zM1629 739h1v1h-1zM1629 744h1v1h-1zM1629 749h1v1h-1zM1629 753h1v1h-1zM1629 758h1v1h-1zM1629 763h1v1h-1zM1629 767h1v1h-1zM1629 772h1v1h-1zM1629 777h1v1h-1zM1629 781h1v1h-1zM1629 786h1v1h-1zM1629 791h1v1h-1zM1629 795h1v1h-1zM1629 800h1v1h-1zM1629 805h1v1h-1zM1629 809h1v1h-1zM1629 814h1v1h-1zM1629 819h1v1h-1zM1629 823h1v1h-1zM1629 828h1v1h-1zM1629 833h1v1h-1zM1629 837h1v1h-1zM1629 842h1v1h-1zM1629 847h1v1h-1zM1629 851h1v1h-1zM1629 856h1v1h-1zM1629 861h1v1h-1zM1629 865h1v1h-1zM1629 870h1v1h-1zM1629 875h1v1h-1zM1629 879h1v1h-1zM1629 884h1v1h-1zM1629 889h1v1h-1zM1629 893h1v1h-1zM1629 898h1v1h-1zM1629 903h1v1h-1zM1629 907h1v1h-1zM1629 912h1v1h-1zM1629 917h1v1h-1zM1629 921h1v1h-1zM1629 926h1v1h-1zM1629 931h1v1h-1zM1629 935h1v1h-1zM1629 940h1v1h-1zM1629 945h1v1h-1zM1629 949h1v1h-1zM1629 954h1v1h-1zM1629 959h1v1h-1zM1629 963h1v1h-1zM1629 968h1v1h-1zM1629 973h1v1h-1zM1629 977h1v1h-1zM1629 982h1v1h-1zM1629 987h1v1h-1z" fill="#b4b4b4"/>
<path d="M55.5 55V992" stroke="#c8c8c8" stroke-width="1" stroke-dasharray="5 5"/>
<g fill="#7a7a7a"><rect x="3" y="290" width="1748" height="2"/><rect x="3" y="524" width="1748" height="2"/><rect x="3" y="758" width="1748" height="2"/></g>
<g stroke="#c8c8c8" stroke-width="1" stroke-dasharray="5 5">
<path d="M3 267.5H1751"/><path d="M3 431.5H1751"/><path d="M3 735.5H1751"/><path d="M3 894.5H1751"/>
</g>
<g font-family="Liberation Sans" font-size="13.4">
<rect x="1715.4" y="74.5" width="31.6" height="14" fill="#000"/><text x="1745" y="86.1" fill="#e6e22e" text-anchor="end">40 V</text><rect x="1715.4" y="97.5" width="31.6" height="14" fill="#000"/><text x="1745" y="109.1" fill="#e6e22e" text-anchor="end">35 V</text><rect x="1715.4" y="120.5" width="31.6" height="14" fill="#000"/><text x="1745" y="132.1" fill="#e6e22e" text-anchor="end">30 V</text><rect x="1715.4" y="144.5" width="31.6" height="14" fill="#000"/><text x="1745" y="156.1" fill="#e6e22e" text-anchor="end">25 V</text><rect x="1715.4" y="167.5" width="31.6" height="14" fill="#000"/><text x="1745" y="179.1" fill="#e6e22e" text-anchor="end">20 V</text><rect x="1715.4" y="190.5" width="31.6" height="14" fill="#000"/><text x="1745" y="202.1" fill="#e6e22e" text-anchor="end">15 V</text><rect x="1715.4" y="213.5" width="31.6" height="14" fill="#000"/><text x="1745" y="225.1" fill="#e6e22e" text-anchor="end">10 V</text><rect x="1722.9" y="237.5" width="24.1" height="14" fill="#000"/><text x="1745" y="249.1" fill="#e6e22e" text-anchor="end">5 V</text><rect x="1722.9" y="260.5" width="24.1" height="14" fill="#000"/><text x="1745" y="272.1" fill="#e6e22e" text-anchor="end">0 V</text>
<rect x="1722.9" y="308.5" width="24.1" height="14" fill="#000"/><text x="1745" y="320.1" fill="#8cc43a" text-anchor="end">1 V</text><rect x="1696.8" y="331.5" width="50.2" height="14" fill="#000"/><text x="1745" y="343.1" fill="#8cc43a" text-anchor="end">800 mV</text><rect x="1696.8" y="355.5" width="50.2" height="14" fill="#000"/><text x="1745" y="367.1" fill="#8cc43a" text-anchor="end">600 mV</text><rect x="1696.8" y="378.5" width="50.2" height="14" fill="#000"/><text x="1745" y="390.1" fill="#8cc43a" text-anchor="end">400 mV</text><rect x="1696.8" y="401.5" width="50.2" height="14" fill="#000"/><text x="1745" y="413.1" fill="#8cc43a" text-anchor="end">200 mV</text><rect x="1722.9" y="424.5" width="24.1" height="14" fill="#000"/><text x="1745" y="436.1" fill="#8cc43a" text-anchor="end">0 V</text><rect x="1692.4" y="448.5" width="54.6" height="14" fill="#000"/><text x="1745" y="460.1" fill="#8cc43a" text-anchor="end">-200 mV</text><rect x="1692.4" y="471.5" width="54.6" height="14" fill="#000"/><text x="1745" y="483.1" fill="#8cc43a" text-anchor="end">-400 mV</text><rect x="1692.4" y="494.5" width="54.6" height="14" fill="#000"/><text x="1745" y="506.1" fill="#8cc43a" text-anchor="end">-600 mV</text>
<rect x="1671.5" y="542.5" width="75.5" height="14" fill="#000"/><text x="1745" y="554.1" fill="#e8902a" text-anchor="end">521.926 mT</text><rect x="1671.5" y="565.5" width="75.5" height="14" fill="#000"/><text x="1745" y="577.1" fill="#e8902a" text-anchor="end">456.685 mT</text><rect x="1671.5" y="589.5" width="75.5" height="14" fill="#000"/><text x="1745" y="601.1" fill="#e8902a" text-anchor="end">391.444 mT</text><rect x="1671.5" y="612.5" width="75.5" height="14" fill="#000"/><text x="1745" y="624.1" fill="#e8902a" text-anchor="end">326.204 mT</text><rect x="1671.5" y="635.5" width="75.5" height="14" fill="#000"/><text x="1745" y="647.1" fill="#e8902a" text-anchor="end">260.963 mT</text><rect x="1671.5" y="658.5" width="75.5" height="14" fill="#000"/><text x="1745" y="670.1" fill="#e8902a" text-anchor="end">195.722 mT</text><rect x="1671.5" y="682.5" width="75.5" height="14" fill="#000"/><text x="1745" y="694.1" fill="#e8902a" text-anchor="end">130.481 mT</text><rect x="1678.9" y="705.5" width="68.1" height="14" fill="#000"/><text x="1745" y="717.1" fill="#e8902a" text-anchor="end">65.241 mT</text><rect x="1723.9" y="728.5" width="23.1" height="14" fill="#000"/><text x="1745" y="740.1" fill="#e8902a" text-anchor="end">0 T</text>
<rect x="1682.6" y="771.5" width="64.4" height="14" fill="#000"/><text x="1745" y="783.1" fill="#8a3aa6" text-anchor="end">719.868 A</text><rect x="1682.6" y="794.5" width="64.4" height="14" fill="#000"/><text x="1745" y="806.1" fill="#8a3aa6" text-anchor="end">575.894 A</text><rect x="1682.6" y="817.5" width="64.4" height="14" fill="#000"/><text x="1745" y="829.1" fill="#8a3aa6" text-anchor="end">431.921 A</text><rect x="1682.6" y="841.5" width="64.4" height="14" fill="#000"/><text x="1745" y="853.1" fill="#8a3aa6" text-anchor="end">287.947 A</text><rect x="1682.6" y="864.5" width="64.4" height="14" fill="#000"/><text x="1745" y="876.1" fill="#8a3aa6" text-anchor="end">143.974 A</text><rect x="1723.6" y="887.5" width="23.4" height="14" fill="#000"/><text x="1745" y="899.1" fill="#8a3aa6" text-anchor="end">0 A</text><rect x="1678.2" y="910.5" width="68.8" height="14" fill="#000"/><text x="1745" y="922.1" fill="#8a3aa6" text-anchor="end">-143.974 A</text><rect x="1678.2" y="934.5" width="68.8" height="14" fill="#000"/><text x="1745" y="946.1" fill="#8a3aa6" text-anchor="end">-287.947 A</text><rect x="1678.2" y="957.5" width="68.8" height="14" fill="#000"/><text x="1745" y="969.1" fill="#8a3aa6" text-anchor="end">-431.921 A</text>
<text x="55.5" y="987" fill="#c4c4c4" text-anchor="middle">0 s</text><text x="230.5" y="987" fill="#c4c4c4" text-anchor="middle">4 ms</text><text x="405.5" y="987" fill="#c4c4c4" text-anchor="middle">8 ms</text><text x="580.5" y="987" fill="#c4c4c4" text-anchor="middle">12 ms</text><text x="755.5" y="987" fill="#c4c4c4" text-anchor="middle">16 ms</text><text x="929.5" y="987" fill="#c4c4c4" text-anchor="middle">20 ms</text><text x="1104.5" y="987" fill="#c4c4c4" text-anchor="middle">24 ms</text><text x="1279.5" y="987" fill="#c4c4c4" text-anchor="middle">28 ms</text><text x="1454.5" y="987" fill="#c4c4c4" text-anchor="middle">32 ms</text><text x="1629.5" y="987" fill="#c4c4c4" text-anchor="middle">36 ms</text>
</g>
<g fill="none" stroke-width="1.3" stroke-linejoin="round">
<path d="M3 265.5 L54 265.5 L55 265 L56 260 L57 270.5 L58 264 L60 266 L62 264.5 L66 265.5 L143.5 265.5 L144.2 270 L144.5 257 L148 258 L150 259 L152 255 L155.6 250.6 L158 250.5 L160 249.5 L165 244 L170.6 239.8 L175 238 L181.9 236.6 L195 232.8 L208 228.5 L230.6 224 L251 221.6 L273.8 219 L280.3 216 L287 216 L288 223 L288.8 217.3 L307.5 217.3 L307.5 219 L322.5 218.4 L323.4 222.5 L329 222 L329 220 L365.6 219 L368.4 217.4 L392 217.8 L401.3 220 L410.6 218.8 L416.3 220.6 L437 226.3 L442.5 227.6 L449 225.3 L459.4 227.2 L549.4 227.6 L549.4 226.6 L780 226.6 L780 227.6 L819.4 227.6 L819.4 228.5 L832.5 229.4 L840 229.4 L866 230.4 L896 233.4 L922.5 236.6 L930 239 L952.5 244 L971 248.2 L993.8 250.6 L1027.5 253.4 L1070.6 255.3 L1104.4 256.3 L1200 257.6 L1245 258.1 L1278.8 258.5 L1352 259 L1370.6 259 L1372.5 257.6 L1382.8 256.6 L1390 257 L1391.3 260 L1415.6 260 L1443.8 260.4 L1445.6 257.6 L1451 257.6 L1453 258.5 L1500 259 L1539.8 258.6 L1540.5 261.3 L1547.8 262.3 L1554.4 264.5 L1560.2 263.5 L1561 259.4 L1565.3 260.1 L1676.9 261.3 L1678.3 257.6 L1686.4 257.6 L1686.4 264.5 L1687.1 258.6 L1714.8 259.1 L1715.5 262.3 L1720.6 262.3 L1721.4 267.4 L1728 267.4 L1728 265.2 L1751 265.5" stroke="#fff23c"/>
<path d="M3 430.5 L380 430.3 L400 430 L410 428.7 L420 424.7 L425.8 418.7 L431.7 412.5 L437.5 403.3 L442.5 397.2 L450 393.3 L456.7 392.5 L631.7 392.5 L632.5 393.3 L690 393.3 L690.8 394.5 L731.3 395.2 L766.7 396 L808.3 397.1 L833.3 398.3 L862.5 400.2 L881.3 401.9 L900 404.6 L916.7 407.7 L929.2 412.3 L950 420 L970.8 424.8 L995.8 427.9 L1012.5 429.2 L1054.2 430 L1100 430.4 L1751 430.5" stroke="#8fd13f"/>
<path d="M3 734.5H55" stroke="#f0962a"/><path d="M3 897.5H8" stroke="#7a2e92"/>
<path d="M55 735 L60 733.5 L66.7 731.8 L127 715 L230 689.3 L405 650 L480 635.7 L580 618 L755 590.7 L930 570 L1000 564.3 L1103.3 557.3 L1200 552.7 L1276.7 550.3 L1320 549.3 L1453.3 549.3 L1506.7 551 L1576.7 553.3 L1640 555.5 L1700 558 L1751 560.5" stroke="#f0962a"/>
<path d="M42 897.5 L54.6 898 L55.5 898 L56 882 L56.6 916 L57.2 890 L58 904 L59 895 L60.8 898.5 L66 899 L70 898 L81.7 899 L144 901.7 L144.2 888 L144.6 931 L145.5 905 L146.5 925 L147.5 912 L148.5 921 L149.5 908 L151 915 L152.5 906 L153.5 920 L155 910 L156 905 L157 919 L158 910 L162 908 L165 919.4 L171 919.4 L173.3 910 L190 909 L227.5 908 L278.5 908.3 L280.6 921.5 L288 920.4 L288.5 898.5 L289 916.3 L306.7 916.3 L307.7 906.3 L321.3 911 L323.3 893.8 L328.5 895.4 L329.6 910 L330.6 900.6 L366 902.7 L368 913 L373.3 913 L374.4 908.3 L375.4 910.6 L399.4 910.6 L401.5 903.3 L408.8 901.7 L410.8 908.3 L415 906.9 L416.7 897.5 L424.2 890 L436.7 871.7 L446.7 860 L448.3 868.3 L458.3 855 L470 845 L486.7 834.2 L503.3 825 L521.7 816.7 L525 812.5 L545 805.8 L570 798.3 L580 795 L588.3 792 L620 787.5 L653.3 785 L678.3 784.2 L703.3 785.5 L727.8 788.5 L755.6 795.6 L788.9 807 L825.9 829.3 L842.6 839.4 L864.8 860.7 L894.4 893.1 L914.8 916.3 L925.9 932 L940.7 942.2 L959.3 949.6 L987 954.3 L1020 957 L1105 959 L1280 957.5 L1370 955 L1371 962.5 L1372 955 L1383 955 L1383.8 962.5 L1391 951 L1440 954 L1445 963.8 L1452.5 961.3 L1540 961.3 L1541 953.8 L1550 947.5 L1554.5 941 L1556 950 L1560 951 L1561 967.5 L1565 958.8 L1677.5 956.3 L1678.8 968.8 L1686 967 L1687 947.5 L1688 960 L1715 960 L1716 951 L1722.5 935 L1728.8 953.8 L1730 943.8 L1751 943.8" stroke="#7a2e92" stroke-width="1.6"/>
</g>

<!-- trigger marker -->
<path d="M45 58H65L55 67.5Z" fill="#f28c1e"/>
<path d="M46 69H64V88H59L55 94L51 88H46Z" fill="#000" stroke="#f28c1e" stroke-width="2"/>
<path d="M50.8 72.8H59.6V75.2H56.4V83.8H54V75.2H50.8Z" fill="#f28c1e"/>
<!-- magnifier triangle -->
<path d="M1710 65H1741Q1744 65 1744 68V97Q1744 100 1741.5 97.5Z" fill="#555"/>
<circle cx="1737" cy="72" r="3.6" fill="none" stroke="#aaa" stroke-width="1.6"/>
<path d="M1734.3 74.8L1727 81" stroke="#aaa" stroke-width="2.2" stroke-linecap="round"/>
<!-- C1 badge -->
<path d="M9 162H78L83.5 174.5L78 187H9Q7 187 7 185V164Q7 162 9 162Z" fill="#1e1b0a" stroke="#e8e42e" stroke-width="2"/>
<path d="M33 162V187" stroke="#e8e42e" stroke-width="2"/>
<text x="20" y="178" fill="#e8e42e" font-family="Liberation Sans" font-size="12.5" text-anchor="middle">C 1</text>
<text x="57" y="178" fill="#e8e42e" font-family="Liberation Sans" font-size="12.5" text-anchor="middle">20 V</text>
<text x="101.5" y="179" fill="#e8e42e" font-family="Liberation Sans" font-size="19" letter-spacing="0.4">U_loop,coil</text>
<!-- C4 badge -->
<path d="M9 396H78L83.5 408.5L78 421H9Q7 421 7 419V398Q7 396 9 396Z" fill="#141a0a" stroke="#8cd43a" stroke-width="2"/>
<path d="M33 396V421" stroke="#8cd43a" stroke-width="2"/>
<text x="20" y="412" fill="#8cd43a" font-family="Liberation Sans" font-size="12.5" text-anchor="middle">C 4</text>
<text x="57.5" y="412" fill="#8cd43a" font-family="Liberation Sans" font-size="12.5" text-anchor="middle">200 mV</text>
<text x="101.5" y="413" fill="#8cd43a" font-family="Liberation Sans" font-size="19" letter-spacing="0.6">U_Photod</text>
<!-- M1 badge -->
<path d="M9 723H30L41.5 734.7L30 747H9Q7 747 7 745V725Q7 723 9 723Z" fill="#1e140a" stroke="#f0962a" stroke-width="1.5"/>
<text x="23" y="738.5" fill="#f0962a" font-family="Liberation Sans" font-size="12" text-anchor="middle">M 1</text>
<text x="54" y="742" fill="#f0962a" font-family="Liberation Sans" font-size="25">B_t</text>
<!-- M2 badge -->
<path d="M9 881H30L41.5 894L30 907H9Q6 907 6 904V884Q6 881 9 881Z" fill="#782d91"/>
<text x="23" y="898.5" fill="#fff" font-family="Liberation Sans" font-size="12" text-anchor="middle">M 2</text>
<text x="68" y="899" fill="#7a2e92" font-family="Liberation Sans" font-size="19.5">p</text>
</svg>

<div style="position:absolute;left:1769px;top:29px;width:160px;height:967px;box-sizing:border-box;border-left:1px solid #5a5450;border-top:1px solid #5a5450;border-bottom:1px solid #5a5450"></div>
<svg style="position:absolute;left:1780px;top:0" width="140" height="30" viewBox="1780 0 140 30">
<text y="25.7" x="1785 1797.5 1813.5 1830 1838.5 1850 1864.5 1880 1886.5" fill="#fff" font-family="Liberation Sans" font-weight="bold" font-size="29.5" textLength="117">Tektronix</text>
<path d="M1815 25.8H1821.2L1831.3 9.5H1825.1Z" fill="#1ebfe0"/>
</svg>
<div style="position:absolute;left:1770px;top:28px;width:150px;text-align:center;color:#e8e8e8;font-weight:bold;font-size:15.5px;line-height:20px;letter-spacing:0.6px;padding-top:1px">Add New...</div>
<div class="btn" style="left:1778px;top:54px;width:63px;height:37px;line-height:32px">Cursors</div>
<div class="btn" style="left:1850px;top:54px;width:63px;height:37px;line-height:32px">Callout</div>
<div class="btn" style="left:1778px;top:100px;width:63px;height:37px;line-height:32px">Measure</div>
<div class="btn" style="left:1850px;top:100px;width:63px;height:37px;line-height:32px">Search</div>
<div class="btn" style="left:1778px;top:146px;width:63px;height:37px;line-height:15px;padding-top:1px">Results<br>Table</div>
<div class="btn" style="left:1850px;top:146px;width:63px;height:37px;line-height:32px">Plot</div>
<div style="position:absolute;left:1773px;top:189px;width:144px;height:1px;background:#5a5450"></div>
<div class="btn" style="left:1778px;top:196px;width:63px;height:37px;line-height:32px"></div>
<div class="btn" style="left:1850px;top:196px;width:63px;height:37px;line-height:32px">More...</div>
<div style="position:absolute;left:1773px;top:241px;width:144px;height:1px;background:#5a5450"></div>
<svg style="position:absolute;left:1795px;top:200px" width="30" height="30" viewBox="0 0 30 30">
<rect x="2.5" y="3.5" width="21" height="19" fill="none" stroke="#bbb" stroke-width="1.6" stroke-dasharray="3 2"/>
<circle cx="14.5" cy="11" r="4.3" fill="none" stroke="#bbb" stroke-width="1.7"/>
<path d="M11.5 14L6.5 19" stroke="#bbb" stroke-width="2.4" stroke-linecap="round"/>
<path d="M18 17L26 22L22.5 23L24.5 27L23 27.8L21 24L18.5 26Z" fill="#bbb"/>
</svg>
<div style="position:absolute;left:1760px;top:501.5px;width:4px;height:22px">
<div style="width:4px;height:5px;border-radius:2px;background:#aaa;margin-bottom:3.5px"></div>
<div style="width:4px;height:5px;border-radius:2px;background:#aaa;margin-bottom:3.5px"></div>
<div style="width:4px;height:5px;border-radius:2px;background:#aaa"></div>
</div>


<div style="position:absolute;left:3px;top:1003px;width:90px;height:76px;border-radius:4px 4px 5px 5px;overflow:hidden;background:#c9c9c9">
<div style="height:19px;background:#4a4522;color:#f4f02a;font-size:15px;line-height:17px;padding-left:6px">Ch 1</div>
<div style="height:1px;background:rgba(0,0,0,0.18)"></div>
<div style="padding-left:5px;color:#111;font-size:14.5px;padding-top:0px"><div style="height:19px;line-height:18px">5 V/div</div><div style="height:19px;line-height:18px">1 MΩ</div><div style="height:19px;line-height:18px">200 kHz</div></div>
<div style="position:absolute;right:7px;top:59px;font-size:10px;line-height:10px;color:#111">B<sub style="font-size:9px;vertical-align:-3px">w</sub></div>
</div>
<div style="position:absolute;left:98px;top:1003px;width:90px;height:76px;border-radius:4px 4px 5px 5px;overflow:hidden;background:#7c7c7c">
<div style="height:19px;background:#29807f;color:#1e2e2e;font-size:15px;line-height:17px;padding-left:6px">Ch 2</div>
<div style="height:1px;background:rgba(0,0,0,0.18)"></div>
<div style="padding-left:5px;color:#222;font-size:14.5px;padding-top:0px"><div style="height:19px;line-height:18px">250 mV/div</div><div style="height:19px;line-height:18px">1 MΩ</div><div style="height:19px;line-height:18px">200 kHz</div></div>
<div style="position:absolute;right:7px;top:59px;font-size:10px;line-height:10px;color:#222">B<sub style="font-size:9px;vertical-align:-3px">w</sub></div>
</div>
<div style="position:absolute;left:193px;top:1003px;width:90px;height:76px;border-radius:4px 4px 5px 5px;overflow:hidden;background:#7c7c7c">
<div style="height:19px;background:#8c3a48;color:#c8a8a8;font-size:15px;line-height:17px;padding-left:6px">Ch 3</div>
<div style="height:1px;background:rgba(0,0,0,0.18)"></div>
<div style="padding-left:5px;color:#222;font-size:14.5px;padding-top:0px"><div style="height:19px;line-height:18px">450 mV/div</div><div style="height:19px;line-height:18px">1 MΩ</div><div style="height:19px;line-height:18px">200 kHz</div></div>
<div style="position:absolute;right:7px;top:59px;font-size:10px;line-height:10px;color:#222">B<sub style="font-size:9px;vertical-align:-3px">w</sub></div>
</div>
<div style="position:absolute;left:288px;top:1003px;width:90px;height:76px;border-radius:4px 4px 5px 5px;overflow:hidden;background:#c9c9c9">
<div style="height:19px;background:#354822;color:#92e030;font-size:15px;line-height:17px;padding-left:6px">Ch 4</div>
<div style="height:1px;background:rgba(0,0,0,0.18)"></div>
<div style="padding-left:5px;color:#111;font-size:14.5px;padding-top:0px"><div style="height:19px;line-height:18px">200 mV/div</div><div style="height:19px;line-height:18px">1 MΩ</div><div style="height:19px;line-height:18px">200 kHz</div></div>
<div style="position:absolute;right:7px;top:59px;font-size:10px;line-height:10px;color:#111">B<sub style="font-size:9px;vertical-align:-3px">w</sub></div>
</div>
<div style="position:absolute;left:383px;top:1003px;width:90px;height:76px;border-radius:4px 4px 5px 5px;overflow:hidden;background:#c9c9c9">
<div style="height:19px;background:#4a3420;color:#f4962a;font-size:15px;line-height:17px;padding-left:6px">Math 1</div>
<div style="height:1px;background:rgba(0,0,0,0.18)"></div>
<div style="padding-left:5px;color:#111;font-size:14.5px;padding-top:0px"><div style="height:19px;line-height:18px">65.2 mT/div</div><div style="height:19px;line-height:18px">Intg(Ch2)…</div></div>

</div>
<div style="position:absolute;left:478px;top:1003px;width:90px;height:76px;border-radius:4px 4px 5px 5px;overflow:hidden;background:#c9c9c9">
<div style="height:19px;background:#6c2a8c;color:#ffffff;font-size:15px;line-height:17px;padding-left:6px">Math 2</div>
<div style="height:1px;background:rgba(0,0,0,0.18)"></div>
<div style="padding-left:5px;color:#111;font-size:14.5px;padding-top:0px"><div style="height:19px;line-height:18px">143.97 A/div</div><div style="height:19px;line-height:18px">-Intg(Ch3…</div></div>

</div>

<div class="btn" style="left:1023px;top:999px;width:40px;height:80px"><div style="position:absolute;left:3px;right:3px;top:7.5px;height:2px;background:#f29a28"></div><div style="position:absolute;left:0;right:0;top:33px;text-align:center;font-size:18px;color:#eee">5</div></div>
<div class="btn" style="left:1068px;top:999px;width:40px;height:80px"><div style="position:absolute;left:3px;right:3px;top:7.5px;height:2px;background:#2a2ad0"></div><div style="position:absolute;left:0;right:0;top:33px;text-align:center;font-size:18px;color:#eee">6</div></div>
<div style="position:absolute;left:1118px;top:1000px;width:1px;height:78px;background:#5a5450"></div>
<div class="btn" style="left:1129px;top:999px;width:40px;height:80px"><div style="position:absolute;left:3px;right:3px;top:7.5px;height:2px;background:#b02424"></div><div style="position:absolute;left:-4px;right:-4px;top:19.5px;text-align:center;font-size:15px;line-height:15.8px;color:#eee">Add<br>New<br>Math</div></div>
<div class="btn" style="left:1174px;top:999px;width:40px;height:80px"><div style="position:absolute;left:3px;right:3px;top:7.5px;height:2px;background:#c8ccdc"></div><div style="position:absolute;left:-4px;right:-4px;top:19.5px;text-align:center;font-size:15px;line-height:15.8px;color:#eee">Add<br>New<br>Ref</div></div>
<div class="btn" style="left:1219px;top:999px;width:40px;height:80px"><div style="position:absolute;left:3px;right:3px;top:7.5px;height:2px;background:#b455e8"></div><div style="position:absolute;left:-4px;right:-4px;top:19.5px;text-align:center;font-size:15px;line-height:15.8px;color:#eee">Add<br>New<br>Bus</div></div>
<div style="position:absolute;left:1269px;top:1000px;width:1px;height:78px;background:#5a5450"></div>

<div style="position:absolute;left:1281px;top:1004px;width:199px;height:74px;border-radius:4px 4px 5px 5px;overflow:hidden;background:#c9c9c9;border:1px solid #1a1a1a;box-sizing:border-box">
<div style="height:18px;background:#5c5c5c;color:#eee;font-size:16px;line-height:16px;padding-left:4px">Horizontal</div>
<div style="height:2px;background:#9a9a9a"></div>
<div style="position:relative;color:#111;font-size:14.5px"><div style="position:absolute;left:3px;top:-2px;line-height:18.7px">4 ms/div<br>SR: 1 MS/s<br>RL: 40 kpts</div>
<div style="position:absolute;left:109px;top:-2px;line-height:18.7px">40 ms<br>1 µs/pt</div><div style="position:absolute;left:123px;top:35.4px;line-height:18.7px">3%</div>
<svg style="position:absolute;left:110px;top:39px" width="10" height="12" viewBox="0 0 10 12"><path d="M1 1H9V8H6.5L5 11L3.5 8H1Z" fill="#111" stroke="#f28c1e" stroke-width="1.5"/><text x="5" y="7.3" fill="#fff" font-size="7" font-weight="bold" text-anchor="middle" font-family="Liberation Sans">T</text></svg></div>
</div>
<div style="position:absolute;left:1485px;top:1004px;width:159px;height:74px;border-radius:4px 4px 5px 5px;overflow:hidden;background:#c9c9c9;border:1px solid #1a1a1a;box-sizing:border-box">
<div style="height:18px;background:#5c5c5c;color:#eee;font-size:16px;line-height:16px;padding-left:4px">Trigger</div>
<div style="height:2px;background:#9a9a9a"></div>
<div style="position:relative;color:#111;font-size:14.5px"><div style="position:absolute;left:4px;top:0px;width:30px;height:16px;border-radius:6px;background:#2424c8;border:1px solid #111;box-sizing:border-box;color:#fff;text-align:center;font-size:15px;line-height:14px">6</div>
<svg style="position:absolute;left:44px;top:2px" width="18" height="14" viewBox="0 0 18 14"><path d="M1 12.5H4.5L12 2.5H16" fill="none" stroke="#3a3aa0" stroke-width="1.3"/></svg>
<div style="position:absolute;left:70px;top:-2px;line-height:18.7px">3 V</div></div>
</div>
<div style="position:absolute;left:1650px;top:1004px;width:150px;height:74px;border-radius:4px 4px 5px 5px;overflow:hidden;background:#c9c9c9;border:1px solid #1a1a1a;box-sizing:border-box">
<div style="height:18px;background:#5c5c5c;color:#eee;font-size:16px;line-height:16px;padding-left:4px">Acquisition</div>
<div style="height:2px;background:#9a9a9a"></div>
<div style="position:relative;color:#111;font-size:14.5px"><div style="position:absolute;left:4px;top:-2px;line-height:18.7px">Manual,<br>High Res: 16 bits<br>Single: 0 /1</div>
<div style="position:absolute;left:85px;top:-2px;line-height:18.7px">Analyze</div></div>
</div>
<div style="position:absolute;left:1811px;top:1000px;width:1px;height:78px;background:#5a5450"></div>
<div style="position:absolute;left:1822px;top:999px;width:90px;height:36px;box-sizing:border-box;border-radius:7px;background:#ff1f27;border:1px solid #555;color:#fff;font-weight:bold;font-size:14px;line-height:33px;text-align:center">Preview</div>
<div style="position:absolute;left:1822px;top:1040px;width:90px;height:38px;box-sizing:border-box;border-radius:6px;background:#c9c9c9;border:1px solid #444;color:#111;font-size:14.5px;line-height:17px;text-align:center;padding-top:0px;letter-spacing:-0.2px">15 May 2025<br>12:30:25 PM</div>

</body></html>
